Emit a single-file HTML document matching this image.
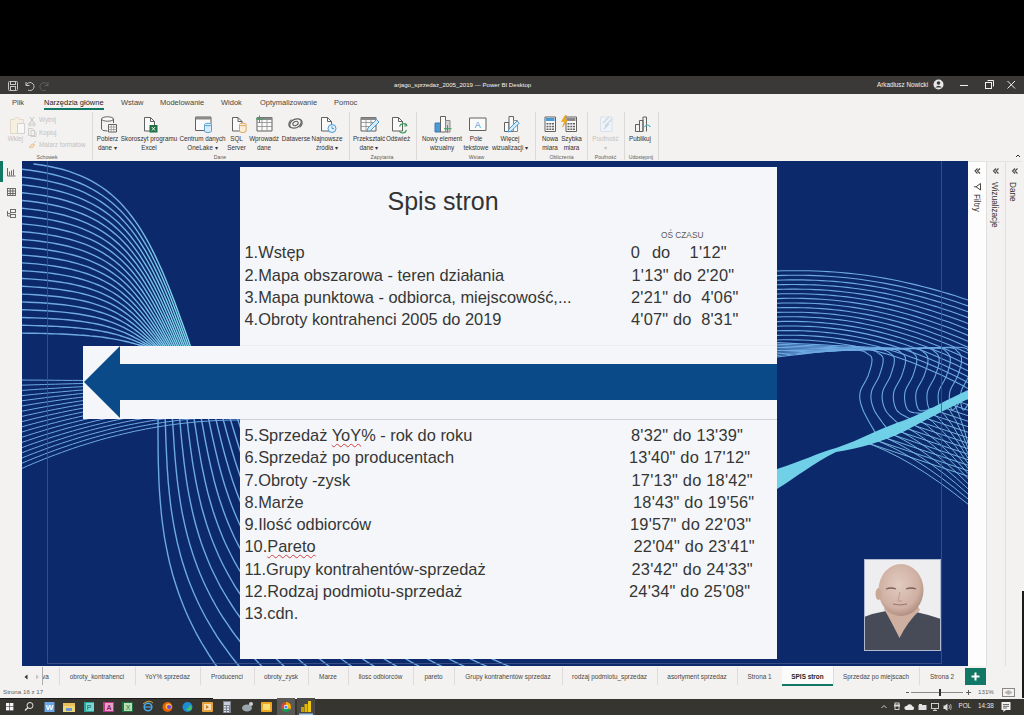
<!DOCTYPE html>
<html><head><meta charset="utf-8">
<style>
*{margin:0;padding:0;box-sizing:border-box}
html,body{width:1024px;height:715px;overflow:hidden;background:#000;font-family:"Liberation Sans",sans-serif}
.a{position:absolute}
.t{position:absolute;white-space:nowrap;line-height:1}
#titlebar{left:0;top:76px;width:1024px;height:18px;background:#3a3938}
#ribbon{left:0;top:94px;width:1024px;height:67px;background:#f3f2f1}
#leftnav{left:0;top:161px;width:22px;height:505px;background:#f3f2f1}
#canvas{left:22px;top:161px;width:946px;height:505px;background:#0c296b;overflow:hidden}
#filtry{left:968px;top:161px;width:18px;height:505px;background:#fdfdfd}
#wiz{left:986px;top:161px;width:19px;height:505px;background:#f3f2f1;border-left:1px solid #e1dfdd}
#dane{left:1005px;top:161px;width:17px;height:505px;background:#f3f2f1;border-left:1px solid #e1dfdd}
#rstrip{left:1022px;top:93px;width:2px;height:605px;background:#f3f2f1}
#tabs{left:0;top:666px;width:1024px;height:20px;background:#f3f2f1}
#status{left:0;top:686px;width:1024px;height:13px;background:#f3f2f1}
#taskbar{left:0;top:698.5px;width:1024px;height:16.5px;background:#363530}
.panel{position:absolute;background:#f4f6f9}
.li{position:absolute;font-size:16.4px;color:#363636;white-space:pre;line-height:1}
.tm{letter-spacing:0.2px}
.sp{text-decoration:underline wavy #d04040;text-decoration-thickness:1px;text-underline-offset:2px}

.rt{top:99px;font-size:7.5px;color:#484644}
.sep{top:112px;width:1px;height:48px;background:#dcdad8}
.lb{position:absolute;width:90px;margin-left:-45px;text-align:center;font-size:6.3px;line-height:9px;top:133.5px;color:#323130;white-space:nowrap}
.dis{color:#c3c1bf}
.sm{font-size:6.3px}
.gl{position:absolute;width:60px;margin-left:-30px;text-align:center;font-size:5.2px;top:154.5px;color:#605e5c;white-space:nowrap;line-height:1}
.tb{position:absolute;top:673.8px;text-align:center;font-size:6.4px;color:#484644;white-space:nowrap;line-height:1}
.vt{position:absolute;font-size:7.3px;color:#323130;white-space:nowrap;line-height:1;writing-mode:vertical-rl}
</style></head><body>
<div id="titlebar" class="a"></div>
<div id="ribbon" class="a"></div>
<div id="leftnav" class="a"></div>
<div id="canvas" class="a">
</div>
<!--WAVES-->
<svg class="a" style="left:22px;top:161px" width="946" height="505" viewBox="22 161 946 505">
<defs><linearGradient id="ga" gradientUnits="userSpaceOnUse" x1="120" y1="0" x2="185" y2="0"><stop offset="0" stop-color="#6eaae2"/><stop offset="1" stop-color="#80d8ec"/></linearGradient><linearGradient id="gb" gradientUnits="userSpaceOnUse" x1="120" y1="0" x2="240" y2="0"><stop offset="0" stop-color="#6eaae2"/><stop offset="1" stop-color="#86d2ee"/></linearGradient></defs>
<g fill="none" stroke-width="1.4" stroke-linecap="round">
<path d="M34.0,164.0 L41.4,165.0 L48.6,166.3 L55.4,167.7 L62.0,169.3 L68.4,171.2 L74.4,173.3 L80.3,175.6 L85.9,178.1 L91.3,180.8 L96.4,183.8 L101.4,187.0 L106.2,190.4 L110.8,194.1 L115.2,198.0 L119.5,202.1 L123.6,206.5 L127.6,211.1 L131.4,216.0 L135.2,221.1 L138.8,226.4 L142.4,232.1 L145.8,237.9 L149.2,244.0 L152.5,250.4 L155.8,257.1 L159.0,264.0 L162.2,271.1 L165.3,278.6 L168.5,286.3 L171.6,294.2 L174.8,302.5 L177.9,311.0 L181.1,319.9 L184.4,328.9 L187.7,338.3 L191.0,348.0" stroke="url(#ga)" stroke-width="1.4"/>
<path d="M22.0,169.3 L30.3,170.3 L38.3,171.5 L45.9,172.9 L53.3,174.5 L60.3,176.3 L67.0,178.3 L73.4,180.6 L79.6,183.0 L85.5,185.7 L91.1,188.5 L96.5,191.7 L101.7,195.0 L106.7,198.5 L111.4,202.3 L116.0,206.3 L120.4,210.6 L124.7,215.1 L128.7,219.8 L132.7,224.7 L136.5,229.9 L140.1,235.4 L143.7,241.1 L147.2,247.0 L150.6,253.2 L153.9,259.7 L157.2,266.4 L160.4,273.3 L163.6,280.6 L166.7,288.0 L169.9,295.8 L173.0,303.8 L176.2,312.1 L179.3,320.7 L182.5,329.5 L185.8,338.6 L189.1,348.0" stroke="url(#ga)" stroke-width="1.4"/>
<path d="M22.0,177.1 L30.2,178.0 L38.1,179.2 L45.7,180.5 L52.9,182.1 L59.8,183.8 L66.5,185.7 L72.8,187.9 L78.9,190.2 L84.7,192.7 L90.3,195.5 L95.7,198.5 L100.8,201.7 L105.7,205.1 L110.4,208.7 L114.9,212.5 L119.3,216.6 L123.5,220.9 L127.5,225.4 L131.4,230.1 L135.2,235.1 L138.8,240.3 L142.3,245.8 L145.8,251.4 L149.1,257.4 L152.4,263.5 L155.6,269.9 L158.8,276.6 L162.0,283.5 L165.1,290.7 L168.2,298.1 L171.3,305.7 L174.4,313.7 L177.5,321.9 L180.7,330.3 L183.9,339.0 L187.2,348.0" stroke="url(#ga)" stroke-width="1.4"/>
<path d="M22.0,184.9 L30.1,185.8 L37.9,186.9 L45.4,188.2 L52.5,189.6 L59.4,191.3 L66.0,193.1 L72.2,195.2 L78.3,197.4 L84.0,199.8 L89.5,202.5 L94.8,205.3 L99.9,208.3 L104.7,211.6 L109.4,215.0 L113.9,218.7 L118.2,222.6 L122.3,226.7 L126.3,231.0 L130.1,235.5 L133.8,240.3 L137.4,245.2 L140.9,250.4 L144.3,255.8 L147.7,261.5 L150.9,267.4 L154.1,273.5 L157.2,279.9 L160.3,286.4 L163.4,293.3 L166.5,300.4 L169.6,307.7 L172.6,315.2 L175.7,323.0 L178.9,331.1 L182.0,339.4 L185.3,348.0" stroke="url(#ga)" stroke-width="1.4"/>
<path d="M22.0,192.7 L30.0,193.6 L37.7,194.6 L45.1,195.8 L52.2,197.2 L59.0,198.8 L65.4,200.5 L71.7,202.5 L77.6,204.6 L83.3,206.9 L88.7,209.4 L94.0,212.1 L99.0,215.0 L103.8,218.1 L108.4,221.4 L112.8,224.9 L117.0,228.6 L121.1,232.5 L125.1,236.6 L128.9,240.9 L132.5,245.4 L136.1,250.1 L139.6,255.1 L142.9,260.3 L146.2,265.6 L149.4,271.2 L152.6,277.1 L155.7,283.1 L158.7,289.4 L161.8,295.9 L164.8,302.6 L167.8,309.6 L170.9,316.8 L173.9,324.2 L177.0,331.9 L180.2,339.8 L183.4,348.0" stroke="url(#ga)" stroke-width="1.4"/>
<path d="M22.0,200.5 L29.9,201.3 L37.5,202.3 L44.8,203.5 L51.8,204.8 L58.5,206.3 L64.9,207.9 L71.1,209.8 L76.9,211.8 L82.6,214.0 L88.0,216.4 L93.1,218.9 L98.1,221.7 L102.8,224.6 L107.4,227.8 L111.7,231.1 L115.9,234.6 L120.0,238.3 L123.9,242.2 L127.6,246.3 L131.2,250.6 L134.7,255.1 L138.2,259.8 L141.5,264.7 L144.7,269.8 L147.9,275.1 L151.0,280.6 L154.1,286.4 L157.1,292.3 L160.1,298.5 L163.1,304.9 L166.1,311.5 L169.1,318.4 L172.1,325.4 L175.2,332.7 L178.3,340.2 L181.5,348.0" stroke="url(#ga)" stroke-width="1.4"/>
<path d="M22.0,208.3 L29.8,209.1 L37.4,210.0 L44.6,211.1 L51.5,212.4 L58.1,213.8 L64.4,215.3 L70.5,217.1 L76.3,219.0 L81.8,221.1 L87.2,223.3 L92.3,225.8 L97.2,228.4 L101.8,231.2 L106.3,234.1 L110.7,237.3 L114.8,240.6 L118.8,244.1 L122.6,247.8 L126.3,251.6 L129.9,255.7 L133.4,260.0 L136.8,264.4 L140.1,269.1 L143.3,273.9 L146.4,278.9 L149.5,284.2 L152.5,289.6 L155.5,295.3 L158.5,301.1 L161.4,307.2 L164.4,313.5 L167.3,319.9 L170.3,326.6 L173.4,333.5 L176.4,340.7 L179.5,348.0" stroke="url(#ga)" stroke-width="1.4"/>
<path d="M22.0,216.1 L29.7,216.8 L37.2,217.7 L44.3,218.7 L51.1,219.9 L57.6,221.3 L63.9,222.8 L69.9,224.4 L75.6,226.2 L81.1,228.2 L86.4,230.3 L91.4,232.6 L96.2,235.1 L100.9,237.7 L105.3,240.5 L109.6,243.4 L113.7,246.6 L117.6,249.9 L121.4,253.4 L125.1,257.0 L128.6,260.9 L132.0,264.9 L135.4,269.1 L138.6,273.5 L141.8,278.0 L144.9,282.8 L147.9,287.8 L150.9,292.9 L153.9,298.2 L156.8,303.7 L159.7,309.5 L162.7,315.4 L165.6,321.5 L168.5,327.8 L171.5,334.3 L174.6,341.1 L177.6,348.0" stroke="url(#ga)" stroke-width="1.4"/>
<path d="M22.0,223.9 L29.7,224.6 L37.0,225.4 L44.0,226.4 L50.8,227.5 L57.2,228.8 L63.4,230.2 L69.3,231.7 L75.0,233.4 L80.4,235.3 L85.6,237.3 L90.6,239.4 L95.3,241.7 L99.9,244.2 L104.3,246.8 L108.5,249.6 L112.5,252.6 L116.4,255.7 L120.2,259.0 L123.8,262.4 L127.3,266.0 L130.7,269.8 L134.0,273.8 L137.2,277.9 L140.3,282.2 L143.4,286.7 L146.4,291.3 L149.3,296.1 L152.3,301.2 L155.2,306.4 L158.0,311.7 L160.9,317.3 L163.8,323.1 L166.7,329.0 L169.7,335.2 L172.7,341.5 L175.7,348.0" stroke="url(#ga)" stroke-width="1.4"/>
<path d="M22.0,231.7 L29.6,232.3 L36.8,233.1 L43.7,234.0 L50.4,235.1 L56.8,236.3 L62.9,237.6 L68.7,239.0 L74.3,240.6 L79.7,242.3 L84.8,244.2 L89.7,246.2 L94.4,248.4 L98.9,250.7 L103.3,253.2 L107.4,255.8 L111.4,258.6 L115.3,261.5 L119.0,264.6 L122.5,267.8 L126.0,271.2 L129.3,274.7 L132.6,278.4 L135.8,282.3 L138.8,286.3 L141.9,290.5 L144.8,294.9 L147.7,299.4 L150.6,304.1 L153.5,309.0 L156.4,314.0 L159.2,319.2 L162.1,324.6 L164.9,330.2 L167.9,336.0 L170.8,341.9 L173.8,348.0" stroke="url(#ga)" stroke-width="1.4"/>
<path d="M22.0,239.5 L29.5,240.1 L36.6,240.8 L43.5,241.7 L50.0,242.6 L56.3,243.7 L62.4,245.0 L68.1,246.3 L73.7,247.8 L78.9,249.4 L84.0,251.2 L88.9,253.1 L93.5,255.1 L98.0,257.3 L102.2,259.5 L106.4,262.0 L110.3,264.6 L114.1,267.3 L117.8,270.2 L121.3,273.2 L124.7,276.3 L128.0,279.6 L131.2,283.1 L134.3,286.7 L137.4,290.5 L140.4,294.4 L143.3,298.4 L146.2,302.7 L149.0,307.1 L151.8,311.6 L154.7,316.3 L157.5,321.2 L160.3,326.2 L163.1,331.4 L166.0,336.8 L168.9,342.3 L171.9,348.0" stroke="url(#ga)" stroke-width="1.4"/>
<path d="M22.0,247.3 L29.4,247.9 L36.4,248.5 L43.2,249.3 L49.7,250.2 L55.9,251.2 L61.8,252.4 L67.5,253.6 L73.0,255.0 L78.2,256.5 L83.2,258.1 L88.0,259.9 L92.6,261.8 L97.0,263.8 L101.2,265.9 L105.3,268.2 L109.2,270.6 L112.9,273.1 L116.5,275.7 L120.0,278.5 L123.4,281.5 L126.6,284.5 L129.8,287.8 L132.9,291.1 L135.9,294.6 L138.8,298.2 L141.7,302.0 L144.6,305.9 L147.4,310.0 L150.2,314.2 L153.0,318.6 L155.8,323.1 L158.5,327.8 L161.4,332.6 L164.2,337.6 L167.1,342.7 L170.0,348.0" stroke="url(#ga)" stroke-width="1.4"/>
<path d="M22.0,255.1 L29.3,255.6 L36.2,256.2 L42.9,257.0 L49.3,257.8 L55.5,258.7 L61.3,259.8 L67.0,260.9 L72.3,262.2 L77.5,263.6 L82.4,265.1 L87.2,266.7 L91.7,268.5 L96.0,270.3 L100.2,272.3 L104.2,274.4 L108.1,276.6 L111.8,278.9 L115.3,281.3 L118.8,283.9 L122.1,286.6 L125.3,289.5 L128.4,292.4 L131.5,295.5 L134.4,298.7 L137.3,302.1 L140.2,305.6 L143.0,309.2 L145.8,312.9 L148.5,316.8 L151.3,320.9 L154.0,325.0 L156.8,329.3 L159.6,333.8 L162.4,338.4 L165.2,343.1 L168.1,348.0" stroke="url(#ga)" stroke-width="1.4"/>
<path d="M22.0,262.9 L29.2,263.4 L36.1,263.9 L42.7,264.6 L49.0,265.4 L55.0,266.2 L60.8,267.2 L66.4,268.3 L71.7,269.4 L76.8,270.7 L81.6,272.1 L86.3,273.5 L90.8,275.1 L95.1,276.8 L99.2,278.6 L103.1,280.5 L106.9,282.6 L110.6,284.7 L114.1,286.9 L117.5,289.3 L120.8,291.8 L123.9,294.4 L127.0,297.1 L130.0,299.9 L133.0,302.9 L135.8,305.9 L138.6,309.1 L141.4,312.4 L144.2,315.9 L146.9,319.4 L149.6,323.1 L152.3,327.0 L155.0,330.9 L157.8,335.0 L160.5,339.2 L163.3,343.5 L166.2,348.0" stroke="url(#ga)" stroke-width="1.4"/>
<path d="M22.0,270.7 L29.1,271.1 L35.9,271.6 L42.4,272.3 L48.6,272.9 L54.6,273.7 L60.3,274.6 L65.8,275.6 L71.0,276.6 L76.0,277.8 L80.8,279.0 L85.5,280.4 L89.9,281.8 L94.1,283.3 L98.2,285.0 L102.1,286.7 L105.8,288.6 L109.4,290.5 L112.9,292.5 L116.2,294.7 L119.5,296.9 L122.6,299.3 L125.6,301.8 L128.6,304.3 L131.5,307.0 L134.3,309.8 L137.1,312.7 L139.8,315.7 L142.5,318.8 L145.2,322.1 L147.9,325.4 L150.6,328.9 L153.3,332.5 L156.0,336.2 L158.7,340.0 L161.5,343.9 L164.3,348.0" stroke="url(#ga)" stroke-width="1.4"/>
<path d="M22.0,278.5 L29.0,278.9 L35.7,279.4 L42.1,279.9 L48.3,280.5 L54.1,281.2 L59.8,282.0 L65.2,282.9 L70.4,283.8 L75.3,284.9 L80.1,286.0 L84.6,287.2 L89.0,288.5 L93.1,289.9 L97.1,291.3 L101.0,292.9 L104.7,294.6 L108.2,296.3 L111.7,298.1 L115.0,300.1 L118.2,302.1 L121.2,304.2 L124.3,306.4 L127.2,308.7 L130.0,311.1 L132.8,313.6 L135.6,316.3 L138.3,319.0 L140.9,321.8 L143.6,324.7 L146.2,327.7 L148.9,330.8 L151.5,334.0 L154.2,337.4 L156.9,340.8 L159.6,344.3 L162.4,348.0" stroke="url(#ga)" stroke-width="1.4"/>
<path d="M22.0,286.3 L28.9,286.6 L35.5,287.1 L41.8,287.5 L47.9,288.1 L53.7,288.7 L59.3,289.4 L64.6,290.2 L69.7,291.0 L74.6,291.9 L79.3,292.9 L83.8,294.0 L88.0,295.2 L92.2,296.4 L96.1,297.7 L99.9,299.1 L103.6,300.6 L107.1,302.1 L110.4,303.7 L113.7,305.4 L116.8,307.2 L119.9,309.1 L122.9,311.1 L125.7,313.1 L128.6,315.3 L131.3,317.5 L134.0,319.8 L136.7,322.2 L139.3,324.7 L141.9,327.3 L144.5,330.0 L147.1,332.7 L149.7,335.6 L152.4,338.6 L155.0,341.6 L157.7,344.8 L160.5,348.0" stroke="url(#ga)" stroke-width="1.4"/>
<path d="M22.0,294.1 L28.8,294.4 L35.3,294.8 L41.6,295.2 L47.5,295.7 L53.3,296.2 L58.8,296.8 L64.0,297.5 L69.0,298.2 L73.9,299.0 L78.5,299.9 L82.9,300.8 L87.1,301.8 L91.2,302.9 L95.1,304.1 L98.8,305.3 L102.4,306.6 L105.9,307.9 L109.2,309.3 L112.4,310.8 L115.5,312.4 L118.5,314.0 L121.5,315.8 L124.3,317.5 L127.1,319.4 L129.8,321.4 L132.5,323.4 L135.1,325.5 L137.7,327.7 L140.3,329.9 L142.8,332.3 L145.4,334.7 L148.0,337.2 L150.6,339.8 L153.2,342.4 L155.8,345.2 L158.5,348.0" stroke="url(#ga)" stroke-width="1.4"/>
<path d="M22.0,301.9 L28.7,302.2 L35.1,302.5 L41.3,302.8 L47.2,303.2 L52.8,303.7 L58.2,304.2 L63.4,304.8 L68.4,305.4 L73.1,306.1 L77.7,306.9 L82.0,307.7 L86.2,308.5 L90.2,309.4 L94.1,310.4 L97.8,311.5 L101.3,312.5 L104.7,313.7 L108.0,314.9 L111.2,316.2 L114.2,317.5 L117.2,319.0 L120.1,320.4 L122.9,322.0 L125.6,323.5 L128.3,325.2 L130.9,326.9 L133.5,328.7 L136.1,330.6 L138.6,332.5 L141.1,334.5 L143.7,336.6 L146.2,338.7 L148.8,340.9 L151.4,343.2 L154.0,345.6 L156.6,348.0" stroke="url(#ga)" stroke-width="1.4"/>
<path d="M22.0,309.7 L28.6,309.9 L34.9,310.2 L41.0,310.5 L46.8,310.8 L52.4,311.2 L57.7,311.6 L62.8,312.1 L67.7,312.6 L72.4,313.2 L76.9,313.8 L81.2,314.5 L85.3,315.2 L89.3,316.0 L93.1,316.8 L96.7,317.6 L100.2,318.5 L103.5,319.5 L106.8,320.5 L109.9,321.6 L112.9,322.7 L115.9,323.9 L118.7,325.1 L121.5,326.4 L124.2,327.7 L126.8,329.1 L129.4,330.5 L131.9,332.0 L134.5,333.5 L137.0,335.2 L139.5,336.8 L142.0,338.5 L144.5,340.3 L147.0,342.1 L149.5,344.0 L152.1,346.0 L154.7,348.0" stroke="url(#ga)" stroke-width="1.4"/>
<path d="M22.0,317.5 L28.5,317.7 L34.8,317.9 L40.7,318.1 L46.5,318.4 L52.0,318.7 L57.2,319.0 L62.3,319.4 L67.1,319.8 L71.7,320.3 L76.1,320.8 L80.3,321.3 L84.4,321.9 L88.3,322.5 L92.0,323.1 L95.6,323.8 L99.1,324.5 L102.4,325.3 L105.6,326.1 L108.6,327.0 L111.6,327.9 L114.5,328.8 L117.3,329.8 L120.0,330.8 L122.7,331.8 L125.3,332.9 L127.8,334.1 L130.4,335.3 L132.8,336.5 L135.3,337.8 L137.8,339.1 L140.2,340.5 L142.7,341.9 L145.2,343.3 L147.7,344.8 L150.2,346.4 L152.8,348.0" stroke="url(#ga)" stroke-width="1.4"/>
<path d="M22.0,325.3 L28.4,325.4 L34.6,325.6 L40.5,325.8 L46.1,326.0 L51.5,326.2 L56.7,326.4 L61.7,326.7 L66.4,327.0 L71.0,327.4 L75.3,327.7 L79.5,328.1 L83.5,328.6 L87.3,329.0 L91.0,329.5 L94.5,330.0 L97.9,330.5 L101.2,331.1 L104.3,331.7 L107.4,332.3 L110.3,333.0 L113.2,333.7 L115.9,334.4 L118.6,335.2 L121.2,336.0 L123.8,336.8 L126.3,337.6 L128.8,338.5 L131.2,339.4 L133.7,340.4 L136.1,341.4 L138.5,342.4 L140.9,343.4 L143.4,344.5 L145.8,345.6 L148.4,346.8 L150.9,348.0" stroke="url(#ga)" stroke-width="1.4"/>
<path d="M22.0,333.1 L28.3,333.2 L34.4,333.3 L40.2,333.4 L45.8,333.5 L51.1,333.7 L56.2,333.9 L61.1,334.0 L65.8,334.2 L70.2,334.5 L74.5,334.7 L78.6,335.0 L82.6,335.2 L86.4,335.5 L90.0,335.9 L93.5,336.2 L96.8,336.5 L100.0,336.9 L103.1,337.3 L106.1,337.7 L109.0,338.2 L111.8,338.6 L114.5,339.1 L117.2,339.6 L119.7,340.1 L122.3,340.6 L124.7,341.2 L127.2,341.8 L129.6,342.4 L132.0,343.0 L134.4,343.6 L136.8,344.3 L139.2,345.0 L141.6,345.7 L144.0,346.5 L146.5,347.2 L149.0,348.0" stroke="url(#ga)" stroke-width="1.4"/>
<path d="M22.0,380.0 L27.6,380.1 L33.2,380.1 L38.9,380.1 L44.5,380.2 L50.1,380.2 L55.8,380.3 L61.4,380.3 L67.0,380.4 L72.6,380.4 L78.2,380.4 L83.9,380.5 L89.5,380.5 L95.1,380.6 L100.8,380.6 L106.4,380.6 L112.0,380.7 L117.6,380.7 L123.2,380.7 L128.9,380.7 L134.5,380.8 L140.1,380.8 L145.8,380.8 L151.4,380.8 L157.0,380.9 L162.6,380.9 L168.2,380.9 L173.9,380.9 L179.5,380.9 L185.1,380.9 L190.8,380.9 L196.4,381.0 L202.0,381.0 L207.6,381.0 L213.2,381.0 L218.9,381.0 L224.5,381.0 L230.1,381.0 L235.8,381.0 L241.4,381.0 L247.0,381.0" stroke="#6eaae2" stroke-width="1.0"/>
<path d="M22.0,385.2 L27.6,385.0 L33.2,384.8 L38.9,384.7 L44.5,384.5 L50.1,384.3 L55.8,384.2 L61.4,384.0 L67.0,383.9 L72.6,383.7 L78.2,383.6 L83.9,383.4 L89.5,383.3 L95.1,383.2 L100.8,383.0 L106.4,382.9 L112.0,382.8 L117.6,382.7 L123.2,382.6 L128.9,382.5 L134.5,382.4 L140.1,382.3 L145.8,382.2 L151.4,382.2 L157.0,382.1 L162.6,382.0 L168.2,382.0 L173.9,381.9 L179.5,381.8 L185.1,381.8 L190.8,381.7 L196.4,381.7 L202.0,381.7 L207.6,381.6 L213.2,381.6 L218.9,381.6 L224.5,381.6 L230.1,381.6 L235.8,381.6 L241.4,381.6 L247.0,381.6" stroke="#6eaae2" stroke-width="1.0"/>
<path d="M22.0,390.4 L27.6,390.0 L33.2,389.6 L38.9,389.2 L44.5,388.9 L50.1,388.5 L55.8,388.2 L61.4,387.8 L67.0,387.5 L72.6,387.2 L78.2,386.9 L83.9,386.6 L89.5,386.3 L95.1,386.0 L100.8,385.8 L106.4,385.5 L112.0,385.3 L117.6,385.0 L123.2,384.8 L128.9,384.6 L134.5,384.4 L140.1,384.2 L145.8,384.0 L151.4,383.9 L157.0,383.7 L162.6,383.6 L168.2,383.4 L173.9,383.3 L179.5,383.2 L185.1,383.1 L190.8,383.0 L196.4,382.9 L202.0,382.8 L207.6,382.7 L213.2,382.7 L218.9,382.6 L224.5,382.6 L230.1,382.6 L235.8,382.6 L241.4,382.6 L247.0,382.6" stroke="#6eaae2" stroke-width="1.0"/>
<path d="M22.0,395.6 L27.6,395.0 L33.2,394.4 L38.9,393.9 L44.5,393.3 L50.1,392.8 L55.8,392.3 L61.4,391.8 L67.0,391.3 L72.6,390.8 L78.2,390.3 L83.9,389.9 L89.5,389.5 L95.1,389.1 L100.8,388.7 L106.4,388.3 L112.0,387.9 L117.6,387.6 L123.2,387.2 L128.9,386.9 L134.5,386.6 L140.1,386.3 L145.8,386.1 L151.4,385.8 L157.0,385.6 L162.6,385.4 L168.2,385.2 L173.9,385.0 L179.5,384.8 L185.1,384.6 L190.8,384.5 L196.4,384.4 L202.0,384.2 L207.6,384.1 L213.2,384.1 L218.9,384.0 L224.5,384.0 L230.1,383.9 L235.8,383.9 L241.4,383.9 L247.0,383.9" stroke="#6eaae2" stroke-width="1.0"/>
<path d="M22.0,400.8 L27.6,400.0 L33.2,399.3 L38.9,398.5 L44.5,397.8 L50.1,397.1 L55.8,396.4 L61.4,395.8 L67.0,395.1 L72.6,394.5 L78.2,393.9 L83.9,393.3 L89.5,392.8 L95.1,392.2 L100.8,391.7 L106.4,391.2 L112.0,390.7 L117.6,390.3 L123.2,389.9 L128.9,389.4 L134.5,389.0 L140.1,388.7 L145.8,388.3 L151.4,388.0 L157.0,387.7 L162.6,387.4 L168.2,387.1 L173.9,386.9 L179.5,386.6 L185.1,386.4 L190.8,386.2 L196.4,386.1 L202.0,385.9 L207.6,385.8 L213.2,385.7 L218.9,385.6 L224.5,385.5 L230.1,385.5 L235.8,385.5 L241.4,385.5 L247.0,385.5" stroke="#6eaae2" stroke-width="1.0"/>
<path d="M22.0,406.0 L27.6,405.0 L33.2,404.1 L38.9,403.2 L44.5,402.3 L50.1,401.5 L55.8,400.6 L61.4,399.8 L67.0,399.0 L72.6,398.3 L78.2,397.6 L83.9,396.9 L89.5,396.2 L95.1,395.5 L100.8,394.9 L106.4,394.3 L112.0,393.7 L117.6,393.1 L123.2,392.6 L128.9,392.1 L134.5,391.6 L140.1,391.2 L145.8,390.7 L151.4,390.3 L157.0,389.9 L162.6,389.6 L168.2,389.3 L173.9,388.9 L179.5,388.7 L185.1,388.4 L190.8,388.2 L196.4,388.0 L202.0,387.8 L207.6,387.6 L213.2,387.5 L218.9,387.4 L224.5,387.3 L230.1,387.3 L235.8,387.2 L241.4,387.2 L247.0,387.2" stroke="#6eaae2" stroke-width="1.0"/>
<path d="M22.0,411.2 L27.6,410.1 L33.2,409.0 L38.9,407.9 L44.5,406.9 L50.1,405.9 L55.8,404.9 L61.4,404.0 L67.0,403.0 L72.6,402.2 L78.2,401.3 L83.9,400.5 L89.5,399.7 L95.1,398.9 L100.8,398.2 L106.4,397.5 L112.0,396.8 L117.6,396.1 L123.2,395.5 L128.9,394.9 L134.5,394.3 L140.1,393.8 L145.8,393.3 L151.4,392.8 L157.0,392.4 L162.6,392.0 L168.2,391.6 L173.9,391.2 L179.5,390.9 L185.1,390.6 L190.8,390.3 L196.4,390.1 L202.0,389.8 L207.6,389.7 L213.2,389.5 L218.9,389.4 L224.5,389.3 L230.1,389.2 L235.8,389.2 L241.4,389.2 L247.0,389.2" stroke="#6eaae2" stroke-width="1.0"/>
<path d="M22.0,416.4 L27.6,415.1 L33.2,413.9 L38.9,412.7 L44.5,411.5 L50.1,410.3 L55.8,409.2 L61.4,408.2 L67.0,407.1 L72.6,406.1 L78.2,405.1 L83.9,404.2 L89.5,403.3 L95.1,402.4 L100.8,401.5 L106.4,400.7 L112.0,400.0 L117.6,399.2 L123.2,398.5 L128.9,397.8 L134.5,397.2 L140.1,396.6 L145.8,396.0 L151.4,395.5 L157.0,394.9 L162.6,394.5 L168.2,394.0 L173.9,393.6 L179.5,393.2 L185.1,392.9 L190.8,392.6 L196.4,392.3 L202.0,392.1 L207.6,391.9 L213.2,391.7 L218.9,391.5 L224.5,391.4 L230.1,391.4 L235.8,391.3 L241.4,391.3 L247.0,391.3" stroke="#6eaae2" stroke-width="1.0"/>
<path d="M22.0,421.6 L27.6,420.2 L33.2,418.8 L38.9,417.4 L44.5,416.1 L50.1,414.8 L55.8,413.6 L61.4,412.4 L67.0,411.2 L72.6,410.1 L78.2,409.0 L83.9,408.0 L89.5,406.9 L95.1,406.0 L100.8,405.0 L106.4,404.1 L112.0,403.2 L117.6,402.4 L123.2,401.6 L128.9,400.9 L134.5,400.2 L140.1,399.5 L145.8,398.8 L151.4,398.2 L157.0,397.7 L162.6,397.1 L168.2,396.6 L173.9,396.2 L179.5,395.7 L185.1,395.4 L190.8,395.0 L196.4,394.7 L202.0,394.4 L207.6,394.2 L213.2,394.0 L218.9,393.9 L224.5,393.7 L230.1,393.6 L235.8,393.6 L241.4,393.6 L247.0,393.6" stroke="#6eaae2" stroke-width="1.0"/>
<path d="M22.0,426.8 L27.6,425.2 L33.2,423.7 L38.9,422.2 L44.5,420.8 L50.1,419.4 L55.8,418.0 L61.4,416.7 L67.0,415.4 L72.6,414.2 L78.2,413.0 L83.9,411.8 L89.5,410.7 L95.1,409.6 L100.8,408.6 L106.4,407.6 L112.0,406.6 L117.6,405.7 L123.2,404.9 L128.9,404.0 L134.5,403.2 L140.1,402.5 L145.8,401.8 L151.4,401.1 L157.0,400.5 L162.6,399.9 L168.2,399.4 L173.9,398.9 L179.5,398.4 L185.1,398.0 L190.8,397.6 L196.4,397.3 L202.0,397.0 L207.6,396.7 L213.2,396.5 L218.9,396.3 L224.5,396.2 L230.1,396.1 L235.8,396.0 L241.4,396.0 L247.0,396.0" stroke="#6eaae2" stroke-width="1.0"/>
<path d="M22.0,432.0 L27.6,430.3 L33.2,428.6 L38.9,427.0 L44.5,425.5 L50.1,423.9 L55.8,422.5 L61.4,421.0 L67.0,419.6 L72.6,418.3 L78.2,417.0 L83.9,415.7 L89.5,414.5 L95.1,413.3 L100.8,412.2 L106.4,411.1 L112.0,410.1 L117.6,409.1 L123.2,408.2 L128.9,407.3 L134.5,406.4 L140.1,405.6 L145.8,404.8 L151.4,404.1 L157.0,403.4 L162.6,402.8 L168.2,402.2 L173.9,401.7 L179.5,401.2 L185.1,400.7 L190.8,400.3 L196.4,399.9 L202.0,399.6 L207.6,399.3 L213.2,399.1 L218.9,398.9 L224.5,398.8 L230.1,398.7 L235.8,398.6 L241.4,398.6 L247.0,398.6" stroke="#6eaae2" stroke-width="1.0"/>
<path d="M22.0,437.2 L27.6,435.4 L33.2,433.6 L38.9,431.9 L44.5,430.2 L50.1,428.5 L55.8,426.9 L61.4,425.4 L67.0,423.9 L72.6,422.5 L78.2,421.1 L83.9,419.7 L89.5,418.4 L95.1,417.2 L100.8,415.9 L106.4,414.8 L112.0,413.7 L117.6,412.6 L123.2,411.6 L128.9,410.6 L134.5,409.7 L140.1,408.8 L145.8,408.0 L151.4,407.2 L157.0,406.5 L162.6,405.8 L168.2,405.2 L173.9,404.6 L179.5,404.1 L185.1,403.6 L190.8,403.1 L196.4,402.7 L202.0,402.4 L207.6,402.1 L213.2,401.8 L218.9,401.6 L224.5,401.5 L230.1,401.4 L235.8,401.3 L241.4,401.3 L247.0,401.3" stroke="#6eaae2" stroke-width="1.0"/>
<path d="M22.0,442.4 L27.6,440.5 L33.2,438.6 L38.9,436.7 L44.5,434.9 L50.1,433.2 L55.8,431.5 L61.4,429.8 L67.0,428.2 L72.6,426.7 L78.2,425.2 L83.9,423.8 L89.5,422.4 L95.1,421.0 L100.8,419.7 L106.4,418.5 L112.0,417.3 L117.6,416.2 L123.2,415.1 L128.9,414.1 L134.5,413.1 L140.1,412.2 L145.8,411.3 L151.4,410.5 L157.0,409.7 L162.6,409.0 L168.2,408.3 L173.9,407.7 L179.5,407.1 L185.1,406.6 L190.8,406.1 L196.4,405.7 L202.0,405.3 L207.6,405.0 L213.2,404.7 L218.9,404.5 L224.5,404.3 L230.1,404.2 L235.8,404.1 L241.4,404.1 L247.0,404.1" stroke="#6eaae2" stroke-width="1.0"/>
<path d="M22.0,447.6 L27.6,445.5 L33.2,443.5 L38.9,441.6 L44.5,439.7 L50.1,437.8 L55.8,436.0 L61.4,434.3 L67.0,432.6 L72.6,431.0 L78.2,429.4 L83.9,427.9 L89.5,426.4 L95.1,425.0 L100.8,423.6 L106.4,422.3 L112.0,421.0 L117.6,419.8 L123.2,418.7 L128.9,417.6 L134.5,416.6 L140.1,415.6 L145.8,414.7 L151.4,413.8 L157.0,413.0 L162.6,412.2 L168.2,411.5 L173.9,410.8 L179.5,410.2 L185.1,409.6 L190.8,409.1 L196.4,408.7 L202.0,408.3 L207.6,408.0 L213.2,407.7 L218.9,407.5 L224.5,407.3 L230.1,407.2 L235.8,407.1 L241.4,407.1 L247.0,407.1" stroke="#6eaae2" stroke-width="1.0"/>
<path d="M22.0,452.8 L27.6,450.6 L33.2,448.5 L38.9,446.5 L44.5,444.4 L50.1,442.5 L55.8,440.6 L61.4,438.8 L67.0,437.0 L72.6,435.3 L78.2,433.6 L83.9,432.0 L89.5,430.5 L95.1,429.0 L100.8,427.5 L106.4,426.2 L112.0,424.9 L117.6,423.6 L123.2,422.4 L128.9,421.2 L134.5,420.1 L140.1,419.1 L145.8,418.1 L151.4,417.2 L157.0,416.3 L162.6,415.5 L168.2,414.8 L173.9,414.1 L179.5,413.4 L185.1,412.8 L190.8,412.3 L196.4,411.9 L202.0,411.4 L207.6,411.1 L213.2,410.8 L218.9,410.5 L224.5,410.4 L230.1,410.2 L235.8,410.2 L241.4,410.1 L247.0,410.1" stroke="#6eaae2" stroke-width="1.0"/>
<path d="M22.0,458.0 L27.6,455.7 L33.2,453.5 L38.9,451.4 L44.5,449.3 L50.1,447.2 L55.8,445.2 L61.4,443.3 L67.0,441.5 L72.6,439.7 L78.2,437.9 L83.9,436.2 L89.5,434.6 L95.1,433.1 L100.8,431.6 L106.4,430.1 L112.0,428.7 L117.6,427.4 L123.2,426.1 L128.9,424.9 L134.5,423.8 L140.1,422.7 L145.8,421.7 L151.4,420.7 L157.0,419.8 L162.6,419.0 L168.2,418.2 L173.9,417.4 L179.5,416.8 L185.1,416.2 L190.8,415.6 L196.4,415.1 L202.0,414.7 L207.6,414.3 L213.2,414.0 L218.9,413.7 L224.5,413.6 L230.1,413.4 L235.8,413.3 L241.4,413.3 L247.0,413.3" stroke="#6eaae2" stroke-width="1.0"/>
<path d="M22.0,463.2 L27.6,460.8 L33.2,458.5 L38.9,456.3 L44.5,454.1 L50.1,452.0 L55.8,449.9 L61.4,447.9 L67.0,446.0 L72.6,444.1 L78.2,442.3 L83.9,440.5 L89.5,438.8 L95.1,437.2 L100.8,435.6 L106.4,434.1 L112.0,432.7 L117.6,431.3 L123.2,430.0 L128.9,428.7 L134.5,427.5 L140.1,426.4 L145.8,425.3 L151.4,424.3 L157.0,423.4 L162.6,422.5 L168.2,421.7 L173.9,420.9 L179.5,420.2 L185.1,419.6 L190.8,419.0 L196.4,418.5 L202.0,418.0 L207.6,417.6 L213.2,417.3 L218.9,417.0 L224.5,416.8 L230.1,416.7 L235.8,416.6 L241.4,416.6 L247.0,416.6" stroke="#6eaae2" stroke-width="1.0"/>
<path d="M22.0,468.4 L27.6,465.9 L33.2,463.5 L38.9,461.2 L44.5,458.9 L50.1,456.7 L55.8,454.6 L61.4,452.5 L67.0,450.5 L72.6,448.5 L78.2,446.6 L83.9,444.8 L89.5,443.1 L95.1,441.4 L100.8,439.7 L106.4,438.2 L112.0,436.7 L117.6,435.3 L123.2,433.9 L128.9,432.6 L134.5,431.3 L140.1,430.2 L145.8,429.0 L151.4,428.0 L157.0,427.0 L162.6,426.1 L168.2,425.2 L173.9,424.5 L179.5,423.7 L185.1,423.1 L190.8,422.5 L196.4,421.9 L202.0,421.5 L207.6,421.1 L213.2,420.7 L218.9,420.5 L224.5,420.2 L230.1,420.1 L235.8,420.0 L241.4,420.0 L247.0,420.0" stroke="#6eaae2" stroke-width="1.0"/>
<path d="M158.0,418.0 L158.0,424.2 L158.0,430.5 L158.0,436.8 L158.1,443.0 L158.1,449.2 L158.2,455.5 L158.3,461.8 L158.5,468.0 L158.7,474.2 L158.9,480.5 L159.2,486.8 L159.6,493.0 L160.1,499.2 L160.6,505.5 L161.2,511.8 L161.8,518.0 L162.6,524.2 L163.5,530.5 L164.4,536.8 L165.5,543.0 L166.7,549.2 L168.0,555.5 L169.4,561.8 L171.0,568.0 L172.6,574.2 L174.5,580.5 L176.5,586.8 L178.6,593.0 L180.9,599.2 L183.3,605.5 L185.9,611.8 L188.7,618.0 L191.7,624.2 L194.8,630.5 L198.2,636.8 L201.7,643.0 L205.5,649.2 L209.4,655.5 L213.6,661.8 L218.0,668.0" stroke="#6eaae2" stroke-width="1.4"/>
<path d="M165.2,418.0 L165.4,424.2 L165.6,430.5 L165.8,436.8 L166.0,443.0 L166.3,449.2 L166.6,455.5 L166.9,461.8 L167.2,468.0 L167.7,474.2 L168.1,480.5 L168.7,486.8 L169.3,493.0 L170.0,499.2 L170.7,505.5 L171.6,511.8 L172.6,518.0 L173.6,524.2 L174.8,530.5 L176.1,536.8 L177.4,543.0 L179.0,549.2 L180.6,555.5 L182.4,561.8 L184.4,568.0 L186.5,574.2 L188.7,580.5 L191.2,586.8 L193.8,593.0 L196.6,599.2 L199.5,605.5 L202.7,611.8 L206.0,618.0 L209.6,624.2 L213.3,630.5 L217.3,636.8 L221.5,643.0 L226.0,649.2 L230.6,655.5 L235.5,661.8 L240.7,668.0" stroke="#6eaae2" stroke-width="1.4"/>
<path d="M172.4,418.0 L172.8,424.2 L173.2,430.5 L173.6,436.8 L174.0,443.0 L174.4,449.2 L174.9,455.5 L175.4,461.8 L176.0,468.0 L176.6,474.2 L177.3,480.5 L178.1,486.8 L179.0,493.0 L179.9,499.2 L180.9,505.5 L182.0,511.8 L183.3,518.0 L184.6,524.2 L186.1,530.5 L187.7,536.8 L189.4,543.0 L191.3,549.2 L193.3,555.5 L195.5,561.8 L197.8,568.0 L200.3,574.2 L203.0,580.5 L205.9,586.8 L209.0,593.0 L212.2,599.2 L215.7,605.5 L219.4,611.8 L223.3,618.0 L227.5,624.2 L231.8,630.5 L236.4,636.8 L241.3,643.0 L246.4,649.2 L251.8,655.5 L257.5,661.8 L263.4,668.0" stroke="#6eaae2" stroke-width="1.4"/>
<path d="M179.6,418.0 L180.2,424.2 L180.7,430.5 L181.3,436.8 L181.9,443.0 L182.6,449.2 L183.3,455.5 L184.0,461.8 L184.8,468.0 L185.6,474.2 L186.5,480.5 L187.5,486.8 L188.6,493.0 L189.8,499.2 L191.1,505.5 L192.5,511.8 L194.0,518.0 L195.6,524.2 L197.4,530.5 L199.3,536.8 L201.3,543.0 L203.6,549.2 L206.0,555.5 L208.5,561.8 L211.2,568.0 L214.2,574.2 L217.3,580.5 L220.6,586.8 L224.2,593.0 L227.9,599.2 L231.9,605.5 L236.1,611.8 L240.6,618.0 L245.3,624.2 L250.3,630.5 L255.6,636.8 L261.1,643.0 L266.9,649.2 L273.0,655.5 L279.4,661.8 L286.1,668.0" stroke="#6eaae2" stroke-width="1.4"/>
<path d="M186.8,418.0 L187.6,424.2 L188.3,430.5 L189.1,436.8 L189.9,443.0 L190.7,449.2 L191.6,455.5 L192.5,461.8 L193.5,468.0 L194.6,474.2 L195.7,480.5 L197.0,486.8 L198.3,493.0 L199.7,499.2 L201.2,505.5 L202.9,511.8 L204.7,518.0 L206.6,524.2 L208.7,530.5 L210.9,536.8 L213.3,543.0 L215.9,549.2 L218.6,555.5 L221.5,561.8 L224.7,568.0 L228.0,574.2 L231.6,580.5 L235.3,586.8 L239.4,593.0 L243.6,599.2 L248.1,605.5 L252.9,611.8 L257.9,618.0 L263.2,624.2 L268.8,630.5 L274.7,636.8 L280.9,643.0 L287.4,649.2 L294.2,655.5 L301.3,661.8 L308.8,668.0" stroke="#6eaae2" stroke-width="1.4"/>
<path d="M194.0,418.0 L194.9,424.2 L195.9,430.5 L196.9,436.8 L197.8,443.0 L198.9,449.2 L200.0,455.5 L201.1,461.8 L202.3,468.0 L203.6,474.2 L204.9,480.5 L206.4,486.8 L207.9,493.0 L209.6,499.2 L211.4,505.5 L213.3,511.8 L215.4,518.0 L217.6,524.2 L220.0,530.5 L222.5,536.8 L225.2,543.0 L228.2,549.2 L231.3,555.5 L234.6,561.8 L238.1,568.0 L241.9,574.2 L245.8,580.5 L250.1,586.8 L254.5,593.0 L259.3,599.2 L264.3,605.5 L269.6,611.8 L275.2,618.0 L281.1,624.2 L287.3,630.5 L293.8,636.8 L300.6,643.0 L307.8,649.2 L315.4,655.5 L323.2,661.8 L331.5,668.0" stroke="#6eaae2" stroke-width="1.4"/>
<path d="M201.2,418.0 L202.3,424.2 L203.5,430.5 L204.6,436.8 L205.8,443.0 L207.0,449.2 L208.3,455.5 L209.7,461.8 L211.1,468.0 L212.6,474.2 L214.1,480.5 L215.8,486.8 L217.6,493.0 L219.5,499.2 L221.6,505.5 L223.8,511.8 L226.1,518.0 L228.6,524.2 L231.3,530.5 L234.1,536.8 L237.2,543.0 L240.5,549.2 L243.9,555.5 L247.6,561.8 L251.5,568.0 L255.7,574.2 L260.1,580.5 L264.8,586.8 L269.7,593.0 L275.0,599.2 L280.5,605.5 L286.3,611.8 L292.5,618.0 L299.0,624.2 L305.8,630.5 L312.9,636.8 L320.4,643.0 L328.3,649.2 L336.5,655.5 L345.2,661.8 L354.2,668.0" stroke="#6eaae2" stroke-width="1.4"/>
<path d="M208.4,418.0 L209.7,424.2 L211.0,430.5 L212.4,436.8 L213.8,443.0 L215.2,449.2 L216.7,455.5 L218.2,461.8 L219.8,468.0 L221.5,474.2 L223.3,480.5 L225.2,486.8 L227.3,493.0 L229.4,499.2 L231.7,505.5 L234.2,511.8 L236.8,518.0 L239.6,524.2 L242.6,530.5 L245.8,536.8 L249.2,543.0 L252.7,549.2 L256.6,555.5 L260.6,561.8 L265.0,568.0 L269.5,574.2 L274.4,580.5 L279.5,586.8 L284.9,593.0 L290.7,599.2 L296.7,605.5 L303.1,611.8 L309.8,618.0 L316.8,624.2 L324.3,630.5 L332.0,636.8 L340.2,643.0 L348.8,649.2 L357.7,655.5 L367.1,661.8 L376.9,668.0" stroke="#6eaae2" stroke-width="1.4"/>
<path d="M215.6,418.0 L217.1,424.2 L218.6,430.5 L220.2,436.8 L221.7,443.0 L223.3,449.2 L225.0,455.5 L226.8,461.8 L228.6,468.0 L230.5,474.2 L232.5,480.5 L234.7,486.8 L236.9,493.0 L239.4,499.2 L241.9,505.5 L244.6,511.8 L247.5,518.0 L250.6,524.2 L253.9,530.5 L257.4,536.8 L261.1,543.0 L265.0,549.2 L269.2,555.5 L273.7,561.8 L278.4,568.0 L283.4,574.2 L288.7,580.5 L294.2,586.8 L300.1,593.0 L306.4,599.2 L312.9,605.5 L319.8,611.8 L327.1,618.0 L334.7,624.2 L342.8,630.5 L351.2,636.8 L360.0,643.0 L369.2,649.2 L378.9,655.5 L389.0,661.8 L399.6,668.0" stroke="#6eaae2" stroke-width="1.4"/>
<path d="M222.8,418.0 L224.5,424.2 L226.2,430.5 L227.9,436.8 L229.7,443.0 L231.5,449.2 L233.4,455.5 L235.3,461.8 L237.4,468.0 L239.5,474.2 L241.7,480.5 L244.1,486.8 L246.6,493.0 L249.3,499.2 L252.1,505.5 L255.1,511.8 L258.2,518.0 L261.6,524.2 L265.2,530.5 L269.0,536.8 L273.1,543.0 L277.3,549.2 L281.9,555.5 L286.7,561.8 L291.8,568.0 L297.2,574.2 L302.9,580.5 L309.0,586.8 L315.3,593.0 L322.0,599.2 L329.1,605.5 L336.6,611.8 L344.4,618.0 L352.6,624.2 L361.2,630.5 L370.3,636.8 L379.8,643.0 L389.7,649.2 L400.1,655.5 L411.0,661.8 L422.3,668.0" stroke="#6eaae2" stroke-width="1.4"/>
<path d="M230.0,418.0 L231.9,424.2 L233.8,430.5 L235.7,436.8 L237.6,443.0 L239.6,449.2 L241.7,455.5 L243.9,461.8 L246.1,468.0 L248.5,474.2 L250.9,480.5 L253.5,486.8 L256.3,493.0 L259.2,499.2 L262.3,505.5 L265.5,511.8 L269.0,518.0 L272.6,524.2 L276.5,530.5 L280.6,536.8 L285.0,543.0 L289.6,549.2 L294.5,555.5 L299.7,561.8 L305.2,568.0 L311.1,574.2 L317.2,580.5 L323.7,586.8 L330.5,593.0 L337.7,599.2 L345.3,605.5 L353.3,611.8 L361.7,618.0 L370.5,624.2 L379.7,630.5 L389.4,636.8 L399.6,643.0 L410.2,649.2 L421.3,655.5 L432.9,661.8 L445.0,668.0" stroke="#6eaae2" stroke-width="1.4"/>
<path d="M237.2,418.0 L239.3,424.2 L241.3,430.5 L243.4,436.8 L245.6,443.0 L247.8,449.2 L250.1,455.5 L252.4,461.8 L254.9,468.0 L257.4,474.2 L260.1,480.5 L263.0,486.8 L265.9,493.0 L269.1,499.2 L272.4,505.5 L275.9,511.8 L279.7,518.0 L283.6,524.2 L287.8,530.5 L292.2,536.8 L296.9,543.0 L301.9,549.2 L307.2,555.5 L312.8,561.8 L318.7,568.0 L324.9,574.2 L331.5,580.5 L338.4,586.8 L345.7,593.0 L353.4,599.2 L361.5,605.5 L370.0,611.8 L379.0,618.0 L388.4,624.2 L398.2,630.5 L408.5,636.8 L419.3,643.0 L430.6,649.2 L442.5,655.5 L454.8,661.8 L467.7,668.0" stroke="#6eaae2" stroke-width="1.4"/>
<path d="M244.4,418.0 L246.7,424.2 L248.9,430.5 L251.2,436.8 L253.6,443.0 L256.0,449.2 L258.4,455.5 L261.0,461.8 L263.6,468.0 L266.4,474.2 L269.3,480.5 L272.4,486.8 L275.6,493.0 L279.0,499.2 L282.6,505.5 L286.4,511.8 L290.4,518.0 L294.6,524.2 L299.1,530.5 L303.9,536.8 L308.9,543.0 L314.2,549.2 L319.9,555.5 L325.8,561.8 L332.1,568.0 L338.7,574.2 L345.7,580.5 L353.1,586.8 L360.9,593.0 L369.1,599.2 L377.7,605.5 L386.8,611.8 L396.3,618.0 L406.2,624.2 L416.7,630.5 L427.7,636.8 L439.1,643.0 L451.1,649.2 L463.7,655.5 L476.7,661.8 L490.4,668.0" stroke="#6eaae2" stroke-width="1.4"/>
<path d="M251.6,418.0 L254.0,424.2 L256.5,430.5 L259.0,436.8 L261.5,443.0 L264.1,449.2 L266.8,455.5 L269.5,461.8 L272.4,468.0 L275.4,474.2 L278.5,480.5 L281.8,486.8 L285.3,493.0 L288.9,499.2 L292.8,505.5 L296.8,511.8 L301.1,518.0 L305.6,524.2 L310.4,530.5 L315.5,536.8 L320.9,543.0 L326.5,549.2 L332.5,555.5 L338.8,561.8 L345.5,568.0 L352.6,574.2 L360.0,580.5 L367.9,586.8 L376.1,593.0 L384.8,599.2 L393.9,605.5 L403.5,611.8 L413.6,618.0 L424.1,624.2 L435.2,630.5 L446.8,636.8 L458.9,643.0 L471.6,649.2 L484.8,655.5 L498.7,661.8 L513.1,668.0" stroke="#6eaae2" stroke-width="1.4"/>
<path d="M777.0,271.0 L783.4,270.8 L789.7,270.7 L796.1,270.7 L802.5,270.7 L808.8,270.8 L815.2,271.0 L821.6,271.2 L827.9,271.6 L834.3,272.0 L840.7,272.5 L847.0,273.1 L853.4,273.7 L859.8,274.5 L866.1,275.3 L872.5,276.2 L878.9,277.3 L885.2,278.4 L891.6,279.5 L898.0,280.8 L904.3,282.2 L910.7,283.6 L917.1,285.1 L923.4,286.7 L929.8,288.4 L936.2,290.1 L942.5,292.0 L948.9,293.9 L955.3,295.8 L961.6,297.9 L968.0,300.0" stroke="#6eaae2" stroke-width="1.1"/>
<path d="M777.0,275.6 L783.4,275.4 L789.7,275.3 L796.1,275.3 L802.5,275.3 L808.8,275.4 L815.2,275.6 L821.6,275.9 L827.9,276.3 L834.3,276.7 L840.7,277.2 L847.0,277.8 L853.4,278.5 L859.8,279.3 L866.1,280.2 L872.5,281.2 L878.9,282.2 L885.2,283.4 L891.6,284.6 L898.0,285.9 L904.3,287.3 L910.7,288.8 L917.1,290.4 L923.4,292.1 L929.8,293.8 L936.2,295.6 L942.5,297.5 L948.9,299.5 L955.3,301.6 L961.6,303.7 L968.0,305.9" stroke="#6eaae2" stroke-width="1.1"/>
<path d="M777.0,280.2 L783.4,280.0 L789.7,279.9 L796.1,279.9 L802.5,279.9 L808.8,280.1 L815.2,280.3 L821.6,280.6 L827.9,281.0 L834.3,281.4 L840.7,282.0 L847.0,282.6 L853.4,283.4 L859.8,284.2 L866.1,285.1 L872.5,286.1 L878.9,287.2 L885.2,288.4 L891.6,289.7 L898.0,291.0 L904.3,292.5 L910.7,294.1 L917.1,295.7 L923.4,297.4 L929.8,299.2 L936.2,301.1 L942.5,303.1 L948.9,305.2 L955.3,307.3 L961.6,309.5 L968.0,311.8" stroke="#6eaae2" stroke-width="1.1"/>
<path d="M777.0,284.8 L783.4,284.6 L789.7,284.5 L796.1,284.5 L802.5,284.6 L808.8,284.7 L815.2,284.9 L821.6,285.3 L827.9,285.7 L834.3,286.1 L840.7,286.7 L847.0,287.4 L853.4,288.2 L859.8,289.0 L866.1,290.0 L872.5,291.0 L878.9,292.2 L885.2,293.4 L891.6,294.7 L898.0,296.2 L904.3,297.7 L910.7,299.3 L917.1,301.0 L923.4,302.8 L929.8,304.7 L936.2,306.6 L942.5,308.7 L948.9,310.8 L955.3,313.0 L961.6,315.3 L968.0,317.7" stroke="#6eaae2" stroke-width="1.1"/>
<path d="M777.0,289.4 L783.4,289.2 L789.7,289.1 L796.1,289.1 L802.5,289.2 L808.8,289.3 L815.2,289.6 L821.6,289.9 L827.9,290.3 L834.3,290.9 L840.7,291.5 L847.0,292.2 L853.4,293.0 L859.8,293.9 L866.1,294.9 L872.5,295.9 L878.9,297.1 L885.2,298.4 L891.6,299.8 L898.0,301.3 L904.3,302.9 L910.7,304.5 L917.1,306.3 L923.4,308.2 L929.8,310.1 L936.2,312.2 L942.5,314.3 L948.9,316.5 L955.3,318.8 L961.6,321.1 L968.0,323.6" stroke="#6eaae2" stroke-width="1.1"/>
<path d="M777.0,294.0 L783.4,293.8 L789.7,293.7 L796.1,293.7 L802.5,293.8 L808.8,294.0 L815.2,294.2 L821.6,294.6 L827.9,295.0 L834.3,295.6 L840.7,296.2 L847.0,296.9 L853.4,297.8 L859.8,298.7 L866.1,299.7 L872.5,300.9 L878.9,302.1 L885.2,303.4 L891.6,304.9 L898.0,306.4 L904.3,308.0 L910.7,309.8 L917.1,311.6 L923.4,313.5 L929.8,315.5 L936.2,317.7 L942.5,319.9 L948.9,322.1 L955.3,324.5 L961.6,327.0 L968.0,329.5" stroke="#6eaae2" stroke-width="1.1"/>
<path d="M777.0,298.6 L783.4,298.4 L789.7,298.3 L796.1,298.3 L802.5,298.4 L808.8,298.6 L815.2,298.9 L821.6,299.3 L827.9,299.7 L834.3,300.3 L840.7,301.0 L847.0,301.7 L853.4,302.6 L859.8,303.6 L866.1,304.6 L872.5,305.8 L878.9,307.1 L885.2,308.5 L891.6,309.9 L898.0,311.5 L904.3,313.2 L910.7,315.0 L917.1,316.9 L923.4,318.9 L929.8,321.0 L936.2,323.2 L942.5,325.4 L948.9,327.8 L955.3,330.2 L961.6,332.8 L968.0,335.4" stroke="#6eaae2" stroke-width="1.1"/>
<path d="M777.0,303.2 L783.4,303.0 L789.7,303.0 L796.1,303.0 L802.5,303.1 L808.8,303.3 L815.2,303.5 L821.6,303.9 L827.9,304.4 L834.3,305.0 L840.7,305.7 L847.0,306.5 L853.4,307.4 L859.8,308.4 L866.1,309.5 L872.5,310.7 L878.9,312.0 L885.2,313.5 L891.6,315.0 L898.0,316.7 L904.3,318.4 L910.7,320.3 L917.1,322.2 L923.4,324.3 L929.8,326.4 L936.2,328.7 L942.5,331.0 L948.9,333.4 L955.3,336.0 L961.6,338.6 L968.0,341.3" stroke="#6eaae2" stroke-width="1.1"/>
<path d="M777.0,307.8 L783.4,307.6 L789.7,307.6 L796.1,307.6 L802.5,307.7 L808.8,307.9 L815.2,308.2 L821.6,308.6 L827.9,309.1 L834.3,309.7 L840.7,310.4 L847.0,311.3 L853.4,312.2 L859.8,313.2 L866.1,314.4 L872.5,315.6 L878.9,317.0 L885.2,318.5 L891.6,320.1 L898.0,321.8 L904.3,323.6 L910.7,325.5 L917.1,327.5 L923.4,329.6 L929.8,331.8 L936.2,334.2 L942.5,336.6 L948.9,339.1 L955.3,341.7 L961.6,344.4 L968.0,347.2" stroke="#6eaae2" stroke-width="1.1"/>
<path d="M777.0,312.4 L783.4,312.2 L789.7,312.2 L796.1,312.2 L802.5,312.3 L808.8,312.5 L815.2,312.9 L821.6,313.3 L827.9,313.8 L834.3,314.4 L840.7,315.2 L847.0,316.0 L853.4,317.0 L859.8,318.1 L866.1,319.3 L872.5,320.6 L878.9,322.0 L885.2,323.5 L891.6,325.1 L898.0,326.9 L904.3,328.8 L910.7,330.7 L917.1,332.8 L923.4,335.0 L929.8,337.3 L936.2,339.7 L942.5,342.2 L948.9,344.7 L955.3,347.4 L961.6,350.2 L968.0,353.1" stroke="#6eaae2" stroke-width="1.1"/>
<path d="M777.0,317.0 L783.4,316.8 L789.7,316.8 L796.1,316.8 L802.5,316.9 L808.8,317.2 L815.2,317.5 L821.6,317.9 L827.9,318.5 L834.3,319.2 L840.7,319.9 L847.0,320.8 L853.4,321.8 L859.8,322.9 L866.1,324.2 L872.5,325.5 L878.9,327.0 L885.2,328.5 L891.6,330.2 L898.0,332.0 L904.3,333.9 L910.7,336.0 L917.1,338.1 L923.4,340.3 L929.8,342.7 L936.2,345.2 L942.5,347.7 L948.9,350.4 L955.3,353.2 L961.6,356.0 L968.0,359.0" stroke="#6eaae2" stroke-width="1.1"/>
<path d="M777.0,321.6 L783.4,321.4 L789.7,321.4 L796.1,321.4 L802.5,321.6 L808.8,321.8 L815.2,322.2 L821.6,322.6 L827.9,323.2 L834.3,323.9 L840.7,324.7 L847.0,325.6 L853.4,326.6 L859.8,327.8 L866.1,329.0 L872.5,330.4 L878.9,331.9 L885.2,333.5 L891.6,335.3 L898.0,337.1 L904.3,339.1 L910.7,341.2 L917.1,343.4 L923.4,345.7 L929.8,348.1 L936.2,350.7 L942.5,353.3 L948.9,356.1 L955.3,358.9 L961.6,361.9 L968.0,364.9" stroke="#6eaae2" stroke-width="1.1"/>
<path d="M777.0,326.2 L783.4,326.0 L789.7,326.0 L796.1,326.0 L802.5,326.2 L808.8,326.4 L815.2,326.8 L821.6,327.3 L827.9,327.9 L834.3,328.6 L840.7,329.4 L847.0,330.4 L853.4,331.4 L859.8,332.6 L866.1,333.9 L872.5,335.4 L878.9,336.9 L885.2,338.6 L891.6,340.4 L898.0,342.3 L904.3,344.3 L910.7,346.4 L917.1,348.7 L923.4,351.1 L929.8,353.6 L936.2,356.2 L942.5,358.9 L948.9,361.7 L955.3,364.6 L961.6,367.7 L968.0,370.8" stroke="#6eaae2" stroke-width="1.1"/>
<path d="M777.0,330.8 L783.4,330.6 L789.7,330.6 L796.1,330.6 L802.5,330.8 L808.8,331.1 L815.2,331.5 L821.6,332.0 L827.9,332.6 L834.3,333.3 L840.7,334.2 L847.0,335.1 L853.4,336.2 L859.8,337.5 L866.1,338.8 L872.5,340.3 L878.9,341.9 L885.2,343.6 L891.6,345.4 L898.0,347.4 L904.3,349.5 L910.7,351.7 L917.1,354.0 L923.4,356.4 L929.8,359.0 L936.2,361.7 L942.5,364.5 L948.9,367.4 L955.3,370.4 L961.6,373.5 L968.0,376.7" stroke="#6eaae2" stroke-width="1.1"/>
<path d="M777.0,335.4 L783.4,335.2 L789.7,335.2 L796.1,335.3 L802.5,335.4 L808.8,335.7 L815.2,336.1 L821.6,336.6 L827.9,337.3 L834.3,338.0 L840.7,338.9 L847.0,339.9 L853.4,341.0 L859.8,342.3 L866.1,343.7 L872.5,345.2 L878.9,346.8 L885.2,348.6 L891.6,350.5 L898.0,352.5 L904.3,354.6 L910.7,356.9 L917.1,359.3 L923.4,361.8 L929.8,364.4 L936.2,367.2 L942.5,370.0 L948.9,373.0 L955.3,376.1 L961.6,379.3 L968.0,382.6" stroke="#6eaae2" stroke-width="1.1"/>
<path d="M777.0,340.0 L783.4,339.8 L789.7,339.8 L796.1,339.9 L802.5,340.0 L808.8,340.3 L815.2,340.8 L821.6,341.3 L827.9,342.0 L834.3,342.7 L840.7,343.7 L847.0,344.7 L853.4,345.9 L859.8,347.2 L866.1,348.6 L872.5,350.1 L878.9,351.8 L885.2,353.6 L891.6,355.6 L898.0,357.6 L904.3,359.8 L910.7,362.1 L917.1,364.6 L923.4,367.2 L929.8,369.9 L936.2,372.7 L942.5,375.6 L948.9,378.7 L955.3,381.8 L961.6,385.1 L968.0,388.5" stroke="#6eaae2" stroke-width="1.1"/>
<path d="M777.0,357.0 L781.2,356.5 L787.0,355.8 L793.9,355.0 L801.4,354.1 L809.2,353.1 L816.7,352.3 L823.6,351.6 L829.3,351.0 L834.1,350.6 L838.3,350.3 L842.2,350.0 L845.7,349.9 L848.9,349.8 L851.8,349.8 L854.5,349.9 L857.0,350.0 L859.2,350.2 L861.1,350.6 L862.7,351.0 L864.0,351.6 L865.1,352.1 L866.1,352.7 L867.1,353.4 L868.0,354.0 L868.9,354.6 L869.7,355.1 L870.4,355.7 L870.9,356.2 L871.4,356.9 L871.7,357.8 L871.9,358.8 L872.0,360.0 L871.9,361.5 L871.7,363.3 L871.3,365.2 L870.8,367.3 L870.1,369.5 L869.5,371.7 L868.7,373.9 L868.0,376.0 L867.1,378.1 L866.0,380.2 L864.8,382.3 L863.6,384.4 L862.4,386.6 L861.3,388.7 L860.5,390.9 L860.0,393.0 L859.8,395.1 L859.7,397.1 L859.9,399.1 L860.2,401.1 L860.7,403.1 L861.3,405.3 L862.1,407.5 L863.0,410.0 L864.2,412.8 L865.9,416.0 L867.7,419.5 L869.7,423.0 L871.6,426.3 L873.4,429.4 L874.9,431.9 L876.0,433.8" stroke="#6eaae2" stroke-width="1.1"/>
<path d="M777.0,355.4 L781.8,355.0 L788.5,354.5 L796.4,353.8 L805.1,353.1 L814.1,352.4 L822.7,351.7 L830.6,351.1 L837.1,350.7 L842.6,350.4 L847.4,350.1 L851.8,349.8 L855.7,349.7 L859.3,349.5 L862.5,349.5 L865.5,349.6 L868.2,349.7 L870.6,349.9 L872.5,350.3 L874.1,350.7 L875.4,351.2 L876.5,351.8 L877.4,352.4 L878.3,353.1 L879.2,353.7 L880.1,354.3 L880.9,354.9 L881.6,355.5 L882.1,356.1 L882.6,356.8 L882.9,357.7 L883.1,358.7 L883.2,360.0 L883.1,361.5 L882.9,363.3 L882.5,365.2 L882.0,367.3 L881.3,369.5 L880.7,371.7 L879.9,373.9 L879.2,376.0 L878.3,378.1 L877.2,380.2 L876.0,382.3 L874.8,384.4 L873.6,386.6 L872.5,388.7 L871.7,390.9 L871.2,393.0 L871.0,395.1 L870.9,397.2 L871.1,399.3 L871.4,401.4 L871.9,403.5 L872.5,405.6 L873.3,407.8 L874.2,410.0 L875.4,412.4 L877.1,415.0 L878.9,417.7 L880.9,420.4 L882.8,423.0 L884.6,425.3 L886.1,427.3 L887.2,428.7" stroke="#6eaae2" stroke-width="1.1"/>
<path d="M777.0,353.8 L782.5,353.5 L790.0,353.1 L799.0,352.7 L808.8,352.2 L819.0,351.6 L828.8,351.2 L837.6,350.7 L845.0,350.4 L851.0,350.1 L856.5,349.9 L861.4,349.6 L865.8,349.4 L869.7,349.3 L873.2,349.2 L876.4,349.3 L879.4,349.4 L881.9,349.6 L884.0,350.0 L885.5,350.4 L886.8,350.9 L887.8,351.5 L888.7,352.1 L889.5,352.7 L890.4,353.4 L891.3,354.0 L892.1,354.6 L892.8,355.3 L893.3,355.9 L893.8,356.7 L894.1,357.6 L894.3,358.7 L894.4,360.0 L894.3,361.5 L894.1,363.3 L893.7,365.3 L893.1,367.4 L892.5,369.5 L891.9,371.7 L891.1,373.9 L890.4,376.0 L889.5,378.1 L888.4,380.2 L887.2,382.3 L886.0,384.4 L884.8,386.6 L883.7,388.7 L882.9,390.9 L882.4,393.0 L882.2,395.1 L882.1,397.3 L882.3,399.5 L882.6,401.7 L883.1,403.9 L883.7,406.0 L884.5,408.0 L885.4,410.0 L886.6,412.0 L888.3,414.0 L890.1,416.0 L892.1,417.9 L894.0,419.7 L895.8,421.3 L897.3,422.6 L898.4,423.6" stroke="#6eaae2" stroke-width="1.1"/>
<path d="M777.0,352.2 L783.1,352.0 L791.5,351.8 L801.6,351.5 L812.5,351.2 L823.8,350.9 L834.8,350.6 L844.6,350.3 L852.8,350.1 L859.5,349.9 L865.6,349.7 L871.0,349.4 L875.8,349.2 L880.1,349.1 L883.9,349.0 L887.4,349.0 L890.6,349.1 L893.3,349.3 L895.4,349.7 L897.0,350.1 L898.2,350.6 L899.2,351.2 L900.0,351.8 L900.7,352.4 L901.6,353.1 L902.5,353.8 L903.3,354.4 L904.0,355.1 L904.5,355.8 L905.0,356.6 L905.3,357.6 L905.5,358.7 L905.6,360.0 L905.5,361.6 L905.3,363.3 L904.9,365.3 L904.4,367.4 L903.7,369.5 L903.1,371.7 L902.3,373.9 L901.6,376.0 L900.7,378.1 L899.6,380.2 L898.4,382.3 L897.2,384.4 L896.0,386.6 L894.9,388.7 L894.1,390.9 L893.6,393.0 L893.4,395.2 L893.3,397.4 L893.5,399.7 L893.8,402.0 L894.3,404.2 L894.9,406.3 L895.7,408.3 L896.6,410.0 L897.8,411.5 L899.5,412.9 L901.3,414.2 L903.3,415.3 L905.2,416.3 L907.0,417.2 L908.5,417.9 L909.6,418.5" stroke="#6eaae2" stroke-width="1.1"/>
<path d="M777.0,350.6 L783.7,350.5 L793.0,350.5 L804.1,350.4 L816.3,350.3 L828.7,350.1 L840.8,350.0 L851.7,349.9 L860.7,349.8 L868.0,349.7 L874.6,349.4 L880.5,349.2 L885.8,349.0 L890.4,348.8 L894.6,348.7 L898.4,348.7 L901.8,348.8 L904.7,349.0 L906.8,349.4 L908.4,349.8 L909.6,350.3 L910.5,350.8 L911.2,351.5 L912.0,352.1 L912.8,352.8 L913.7,353.5 L914.5,354.2 L915.2,354.9 L915.7,355.7 L916.2,356.5 L916.5,357.5 L916.7,358.7 L916.8,360.0 L916.7,361.6 L916.5,363.4 L916.1,365.3 L915.5,367.4 L914.9,369.5 L914.3,371.7 L913.5,373.9 L912.8,376.0 L911.9,378.1 L910.8,380.2 L909.6,382.3 L908.4,384.4 L907.2,386.6 L906.1,388.7 L905.3,390.9 L904.8,393.0 L904.6,395.2 L904.5,397.6 L904.7,400.0 L905.0,402.3 L905.5,404.6 L906.1,406.7 L906.9,408.5 L907.8,410.0 L909.0,411.1 L910.7,411.9 L912.5,412.4 L914.5,412.8 L916.4,413.0 L918.2,413.1 L919.7,413.3 L920.8,413.4" stroke="#6eaae2" stroke-width="1.1"/>
<path d="M777.0,349.0 L784.4,349.0 L794.5,349.1 L806.7,349.2 L820.0,349.3 L833.6,349.4 L846.8,349.5 L858.7,349.5 L868.5,349.5 L876.5,349.4 L883.7,349.2 L890.1,349.0 L895.8,348.8 L900.8,348.6 L905.3,348.4 L909.4,348.4 L913.0,348.5 L916.0,348.7 L918.3,349.1 L919.9,349.5 L921.0,350.0 L921.9,350.5 L922.5,351.1 L923.2,351.8 L924.0,352.5 L924.9,353.2 L925.7,353.9 L926.4,354.7 L926.9,355.5 L927.4,356.4 L927.7,357.4 L927.9,358.6 L928.0,360.0 L927.9,361.6 L927.7,363.4 L927.3,365.3 L926.8,367.4 L926.1,369.6 L925.5,371.7 L924.7,373.9 L924.0,376.0 L923.1,378.1 L922.0,380.2 L920.8,382.3 L919.6,384.4 L918.4,386.6 L917.3,388.7 L916.5,390.9 L916.0,393.0 L915.8,395.3 L915.7,397.7 L915.9,400.2 L916.2,402.7 L916.7,405.0 L917.3,407.1 L918.1,408.8 L919.0,410.0 L920.2,410.7 L921.9,410.9 L923.7,410.7 L925.7,410.2 L927.6,409.7 L929.4,409.1 L930.9,408.6 L932.0,408.3" stroke="#6eaae2" stroke-width="1.1"/>
<path d="M777.0,347.4 L785.0,347.6 L796.1,347.8 L809.2,348.1 L823.7,348.4 L838.5,348.7 L852.8,348.9 L865.7,349.1 L876.3,349.2 L885.0,349.2 L892.8,349.0 L899.7,348.8 L905.8,348.6 L911.2,348.3 L916.0,348.2 L920.3,348.1 L924.2,348.2 L927.4,348.4 L929.7,348.8 L931.3,349.2 L932.4,349.7 L933.2,350.2 L933.8,350.8 L934.4,351.5 L935.2,352.2 L936.1,352.9 L936.9,353.7 L937.6,354.5 L938.1,355.3 L938.6,356.3 L938.9,357.4 L939.1,358.6 L939.2,360.0 L939.1,361.6 L938.9,363.4 L938.5,365.4 L938.0,367.4 L937.3,369.6 L936.7,371.7 L935.9,373.9 L935.2,376.0 L934.3,378.1 L933.2,380.2 L932.0,382.3 L930.8,384.4 L929.6,386.6 L928.5,388.7 L927.7,390.9 L927.2,393.0 L927.0,395.3 L926.9,397.8 L927.1,400.4 L927.4,403.0 L927.9,405.4 L928.5,407.4 L929.3,409.0 L930.2,410.0 L931.4,410.2 L933.1,409.8 L934.9,408.9 L936.9,407.7 L938.8,406.3 L940.6,405.0 L942.1,403.9 L943.2,403.2" stroke="#6eaae2" stroke-width="1.1"/>
<path d="M777.0,345.8 L785.7,346.1 L797.6,346.5 L811.8,346.9 L827.4,347.4 L843.4,347.9 L858.8,348.3 L872.7,348.7 L884.2,348.9 L893.5,348.9 L901.9,348.8 L909.3,348.6 L915.8,348.3 L921.6,348.1 L926.7,347.9 L931.3,347.8 L935.4,347.9 L938.7,348.1 L941.1,348.5 L942.8,348.9 L943.9,349.3 L944.6,349.9 L945.1,350.5 L945.6,351.2 L946.4,351.9 L947.3,352.7 L948.1,353.5 L948.8,354.3 L949.3,355.2 L949.8,356.2 L950.1,357.3 L950.3,358.6 L950.4,360.0 L950.3,361.6 L950.1,363.4 L949.7,365.4 L949.1,367.4 L948.5,369.6 L947.9,371.7 L947.1,373.9 L946.4,376.0 L945.5,378.1 L944.4,380.2 L943.2,382.3 L942.0,384.4 L940.8,386.6 L939.7,388.7 L938.9,390.9 L938.4,393.0 L938.2,395.3 L938.1,397.9 L938.3,400.6 L938.6,403.3 L939.1,405.7 L939.7,407.8 L940.5,409.3 L941.4,410.0 L942.6,409.8 L944.3,408.8 L946.1,407.1 L948.1,405.1 L950.0,403.0 L951.8,400.9 L953.3,399.3 L954.4,398.1" stroke="#6eaae2" stroke-width="1.1"/>
<path d="M777.0,344.2 L786.3,344.6 L799.1,345.1 L814.4,345.8 L831.1,346.5 L848.3,347.2 L864.8,347.8 L879.7,348.3 L892.0,348.6 L902.0,348.7 L910.9,348.6 L918.8,348.4 L925.8,348.1 L932.0,347.8 L937.4,347.6 L942.3,347.5 L946.6,347.6 L950.1,347.8 L952.6,348.1 L954.2,348.5 L955.3,349.0 L955.9,349.6 L956.4,350.2 L956.9,350.9 L957.6,351.6 L958.5,352.4 L959.3,353.2 L960.0,354.1 L960.5,355.1 L961.0,356.1 L961.3,357.3 L961.5,358.6 L961.6,360.0 L961.5,361.6 L961.3,363.4 L960.9,365.4 L960.4,367.5 L959.7,369.6 L959.1,371.8 L958.3,373.9 L957.6,376.0 L956.7,378.1 L955.6,380.2 L954.4,382.3 L953.2,384.4 L952.0,386.6 L950.9,388.7 L950.1,390.9 L949.6,393.0 L949.4,395.4 L949.3,398.0 L949.5,400.9 L949.8,403.6 L950.3,406.1 L950.9,408.1 L951.7,409.5 L952.6,410.0 L953.8,409.4 L955.5,407.8 L957.3,405.4 L959.3,402.6 L961.2,399.7 L963.0,396.9 L964.5,394.6 L965.6,393.0" stroke="#6eaae2" stroke-width="1.1"/>
<path d="M777.0,342.6 L786.9,343.1 L800.6,343.8 L816.9,344.6 L834.8,345.5 L853.1,346.4 L870.8,347.2 L886.8,347.9 L899.9,348.3 L910.5,348.5 L920.0,348.4 L928.4,348.2 L935.8,347.9 L942.4,347.6 L948.1,347.4 L953.2,347.2 L957.8,347.3 L961.5,347.5 L964.0,347.8 L965.7,348.2 L966.7,348.7 L967.3,349.2 L967.6,349.9 L968.1,350.5 L968.8,351.3 L969.7,352.1 L970.5,353.0 L971.2,353.9 L971.7,354.9 L972.2,356.0 L972.5,357.2 L972.7,358.5 L972.8,360.0 L972.7,361.6 L972.5,363.5 L972.1,365.4 L971.5,367.5 L970.9,369.6 L970.3,371.8 L969.5,373.9 L968.8,376.0 L967.9,378.1 L966.8,380.2 L965.6,382.3 L964.4,384.4 L963.2,386.6 L962.1,388.7 L961.3,390.9 L960.8,393.0 L960.6,395.4 L960.5,398.2 L960.7,401.1 L961.0,403.9 L961.5,406.5 L962.1,408.5 L962.9,409.7 L963.8,410.0 L965.0,409.0 L966.7,406.7 L968.5,403.6 L970.5,400.0 L972.4,396.3 L974.2,392.8 L975.7,389.9 L976.8,387.9" stroke="#6eaae2" stroke-width="1.1"/>
<path d="M862.0,441.2 L968.0,476.2" stroke="#7fc0e6" stroke-width="0.9"/>
<path d="M869.0,438.0 L968.0,470.7" stroke="#7fc0e6" stroke-width="0.9"/>
<path d="M876.0,434.8 L968.0,465.2" stroke="#7fc0e6" stroke-width="0.9"/>
<path d="M883.0,431.6 L968.0,459.7" stroke="#7fc0e6" stroke-width="0.9"/>
<path d="M890.0,428.4 L968.0,454.2" stroke="#7fc0e6" stroke-width="0.9"/>
<path d="M897.0,425.3 L968.0,448.7" stroke="#7fc0e6" stroke-width="0.9"/>
<path d="M904.0,422.1 L968.0,443.2" stroke="#7fc0e6" stroke-width="0.9"/>
<path d="M911.0,418.9 L968.0,437.7" stroke="#7fc0e6" stroke-width="0.9"/>
<path d="M918.0,415.7 L968.0,432.2" stroke="#7fc0e6" stroke-width="0.9"/>
<path d="M925.0,412.5 L968.0,426.7" stroke="#7fc0e6" stroke-width="0.9"/>
<path d="M932.0,409.3 L968.0,421.2" stroke="#7fc0e6" stroke-width="0.9"/>
<path d="M939.0,406.1 L968.0,415.7" stroke="#7fc0e6" stroke-width="0.9"/>
<path d="M946.0,403.0 L968.0,410.2" stroke="#7fc0e6" stroke-width="0.9"/>
<path d="M953.0,399.8 L968.0,404.7" stroke="#7fc0e6" stroke-width="0.9"/>
<path d="M960.0,396.6 L968.0,399.2" stroke="#7fc0e6" stroke-width="0.9"/>
<path d="M862.0,441.2 Q909.7,456.9 968.0,504.1" stroke="#7fc0e6" stroke-width="0.9"/>
<path d="M869.5,437.8 Q913.8,453.1 968.0,499.0" stroke="#7fc0e6" stroke-width="0.9"/>
<path d="M877.0,434.4 Q918.0,449.2 968.0,493.9" stroke="#7fc0e6" stroke-width="0.9"/>
<path d="M884.5,430.9 Q922.1,445.4 968.0,488.8" stroke="#7fc0e6" stroke-width="0.9"/>
<path d="M892.0,427.5 Q926.2,441.6 968.0,483.7" stroke="#7fc0e6" stroke-width="0.9"/>
<path d="M899.5,424.1 Q930.3,437.7 968.0,478.6" stroke="#7fc0e6" stroke-width="0.9"/>
<path d="M907.0,420.7 Q934.5,433.9 968.0,473.5" stroke="#7fc0e6" stroke-width="0.9"/>
<path d="M914.5,417.3 Q938.6,430.1 968.0,468.4" stroke="#7fc0e6" stroke-width="0.9"/>
<path d="M922.0,413.9 Q942.7,426.2 968.0,463.3" stroke="#7fc0e6" stroke-width="0.9"/>
<path d="M929.5,410.5 Q946.8,422.4 968.0,458.2" stroke="#7fc0e6" stroke-width="0.9"/>
<path d="M937.0,407.1 Q951.0,418.6 968.0,453.1" stroke="#7fc0e6" stroke-width="0.9"/>
<path d="M944.5,403.6 Q955.1,414.7 968.0,448.0" stroke="#7fc0e6" stroke-width="0.9"/>
<path d="M952.0,400.2 Q959.2,410.9 968.0,442.9" stroke="#7fc0e6" stroke-width="0.9"/>
</g>
<path d="M777,469 C800,462 820,452 836,448 C860,440 880,428 905,420 C930,410 950,398 968,390 L968,399 C945,410 925,420 905,431 C880,443 860,448 836,452 C815,462 795,478 777,489 Z" fill="#6fd0e8"/>
<g fill="none" stroke="#44558a" stroke-width="0.8">
<path d="M47.5,161 V663.5 H941.5 V161"/>
</g>
</svg>
<!--/WAVES-->
<div id="filtry" class="a"></div>
<div id="wiz" class="a"></div>
<div id="dane" class="a"></div>
<div id="tabs" class="a"></div>
<div id="status" class="a"></div>
<div id="taskbar" class="a"></div>


<!-- title bar content -->
<svg class="a" style="left:0;top:76px" width="1024" height="18">
  <g fill="none" stroke="#c8c6c4" stroke-width="1">
    <rect x="8.5" y="5.5" width="9" height="9" rx="1"/>
    <rect x="10.5" y="5.5" width="5" height="3"/>
    <rect x="10.5" y="10.5" width="5" height="4"/>
    <path d="M26 6 v3.5 h3.5 M26.3 9.2 A4 4 0 1 1 28 14"/>
    <path d="M48 6 v3.5 h-3.5 M47.7 9.2 A4 4 0 1 0 46 14" stroke="#5f5e5c"/>
  </g>
  <circle cx="938.5" cy="8.5" r="5" fill="#e8e8e8"/>
  <circle cx="938.5" cy="7" r="1.8" fill="#3b3a39"/>
  <path d="M935.2 11.6 q3.3 -3.6 6.6 0" fill="#3b3a39"/>
  <g stroke="#f0f0f0" stroke-width="1" fill="none">
    <path d="M960 9.5 h8"/>
    <rect x="985.5" y="6.5" width="6" height="6"/>
    <path d="M987.5 4.5 h6 v6"/>
    <path d="M1007.5 5 l7.5 7.5 M1015 5 l-7.5 7.5"/>
  </g>
</svg>
<div class="t" style="left:394px;top:82px;font-size:6.1px;color:#f3f3f3">arjago_sprzedaz_2005_2019 — Power BI Desktop</div>
<div class="t" style="left:877px;top:82px;font-size:6.3px;color:#f3f3f3">Arkadiusz Nowicki</div>

<!-- ribbon tabs -->
<div class="t rt" style="left:12px">Plik</div>
<div class="t rt" style="left:44px;color:#252423">Narzędzia główne</div>
<div class="a" style="left:44px;top:107.5px;width:60px;height:2px;background:#117865"></div>
<div class="t rt" style="left:121px">Wstaw</div>
<div class="t rt" style="left:160px">Modelowanie</div>
<div class="t rt" style="left:221px">Widok</div>
<div class="t rt" style="left:260px">Optymalizowanie</div>
<div class="t rt" style="left:334px">Pomoc</div>

<!-- ribbon separators -->
<div class="a sep" style="left:92px"></div>
<div class="a sep" style="left:349px"></div>
<div class="a sep" style="left:416px"></div>
<div class="a sep" style="left:535px"></div>
<div class="a sep" style="left:587px"></div>
<div class="a sep" style="left:624px"></div>
<div class="a sep" style="left:658px"></div>


<!-- ribbon icons -->
<svg class="a" style="left:0;top:0" width="700" height="161">
<g fill="none" stroke-width="1" stroke-linejoin="round">
<!-- Wklej disabled -->
<path d="M10.5 119.5 h4 l1 -2 h3 l1 2 h4 v14 h-13z" stroke="#e3d9c6" fill="#f6f0e2"/>
<rect x="17.5" y="123.5" width="7" height="10" stroke="#d4d2d0" fill="#f8f8f8"/>
<!-- scissors -->
<path d="M30 117 l4 6 M34 117 l-4 6" stroke="#c8c6c4"/><circle cx="30" cy="124.5" r="1.3" stroke="#c8c6c4"/><circle cx="34" cy="124.5" r="1.3" stroke="#c8c6c4"/>
<!-- copy -->
<path d="M28.5 128.5 h4 l2 2 v5 h-6z M31 130.5 h3 l2 2 v4 h-5z" stroke="#cfcdcb"/>
<!-- painter -->
<path d="M29 147 l3 -3 l3 1 l-3 3z" stroke="#ecc59c" fill="#f4dcc0"/><path d="M33 144 l3 -3" stroke="#cfcdcb"/>
<!-- Pobierz dane -->
<path d="M101.5 119 v10 q0 2 6 2" stroke="#616161"/><path d="M113.5 119 v4" stroke="#616161"/>
<ellipse cx="107.5" cy="119" rx="6" ry="2.2" stroke="#616161" fill="#fafafa"/>
<rect x="108.5" y="124.5" width="8" height="7.5" stroke="#616161" fill="#fafafa"/>
<path d="M108.5 127 h8 M108.5 129.5 h8 M111.2 124.5 v7.5 M113.8 124.5 v7.5" stroke="#8a8a8a" stroke-width="0.7"/>
<!-- Excel -->
<path d="M144.5 117.5 h6 l4 4 v9.5 h-10z" stroke="#616161" fill="#fafafa"/><path d="M150.5 117.5 v4 h4" stroke="#616161"/>
<rect x="149.5" y="125" width="8" height="7.5" fill="#1e7145" stroke="none"/>
<path d="M151.8 127 l3.4 3.6 M155.2 127 l-3.4 3.6" stroke="#fff" stroke-width="0.9"/>
<!-- OneLake -->
<rect x="195.5" y="117" width="15.5" height="13.5" stroke="#616161" fill="#fafafa"/><rect x="195.5" y="117" width="15.5" height="2.5" fill="#8a8a8a" stroke="none"/>
<path d="M204.5 124.5 v6.5 q0 1.5 3.5 1.5 q3.5 0 3.5 -1.5 v-6.5" stroke="#5aa0d0" fill="#d6ecf8"/><ellipse cx="208" cy="124.5" rx="3.5" ry="1.3" stroke="#5aa0d0" fill="#d6ecf8"/>
<!-- SQL Server -->
<path d="M232.5 117.5 h5.5 l4 4 v9.5 h-9.5z" stroke="#616161" fill="#fafafa"/><path d="M238 117.5 v4 h4" stroke="#616161"/>
<path d="M239.5 124.5 v6.5 q0 1.5 3.3 1.5 q3.3 0 3.3 -1.5 v-6.5" stroke="#d9a760" fill="#fbeed8"/><ellipse cx="242.8" cy="124.5" rx="3.3" ry="1.3" stroke="#d9a760" fill="#fbeed8"/>
<!-- Wprowadz dane -->
<rect x="257" y="117.5" width="15" height="13.5" stroke="#616161" fill="#fafafa"/><rect x="257" y="117.5" width="15" height="2.5" fill="#8a8a8a" stroke="none"/>
<path d="M257 122.5 h15 M257 126.5 h15 M262 117.5 v13.5 M267 117.5 v13.5" stroke="#8a8a8a" stroke-width="0.8"/>
<path d="M259.5 115.5 v7 M256 119 h7" stroke="#3aa05a" stroke-width="1"/>
<!-- Dataverse -->
<g transform="rotate(-25 295.5 123.5)">
<path d="M289.5 125.5 a6.5 4.8 0 1 1 8 3.2" stroke="#616161" stroke-width="1.2"/>
<path d="M301.5 121.5 a6.5 4.8 0 1 1 -8 -3.2" stroke="#616161" stroke-width="1.2"/>
<ellipse cx="295.5" cy="123.5" rx="2.8" ry="2" stroke="#616161" stroke-width="1.1"/>
</g>
<!-- Najnowsze -->
<path d="M321.5 117.5 h6 l4 4 v9.5 h-10z" stroke="#616161" fill="#fafafa"/><path d="M327.5 117.5 v4 h4" stroke="#616161"/>
<circle cx="332" cy="128.5" r="4" stroke="#4a9ad6" fill="#e4f1fb"/><path d="M332 126.3 v2.3 h2" stroke="#4a9ad6"/>
<!-- Przeksztalc -->
<rect x="361" y="117.5" width="15" height="13.5" stroke="#616161" fill="#fafafa"/><rect x="361" y="117.5" width="15" height="2.5" fill="#8a8a8a" stroke="none"/>
<path d="M361 122.5 h15 M361 126.5 h15 M366 117.5 v13.5 M371 117.5 v13.5" stroke="#8a8a8a" stroke-width="0.8"/>
<path d="M367 131.5 l1 -3.5 l8.5 -8.5 l2.5 2.5 l-8.5 8.5z" stroke="#4a9ad6" fill="#d6ecf8"/>
<!-- Odswiez -->
<path d="M392.5 117.5 h6 l4 4 v9.5 h-10z" stroke="#616161" fill="#fafafa"/><path d="M398.5 117.5 v4 h4" stroke="#616161"/>
<path d="M399.5 126.5 a4 4 0 0 1 7.3 -1 M406.5 130 a4 4 0 0 1 -7.3 1" stroke="#3aa05a" stroke-width="1.2"/>
<path d="M405.5 123 l1.6 2.7 l-2.9 0.4" stroke="#3aa05a"/>
<!-- Nowy element wizualny -->
<rect x="435" y="123" width="5.5" height="9" fill="#4a9ad6" stroke="#3a7ab6"/>
<rect x="440.5" y="116.5" width="5" height="15.5" stroke="#616161" fill="#fafafa"/>
<rect x="445.5" y="120.5" width="4.5" height="11.5" stroke="#8a8a8a" fill="#d0d0d0"/>
<path d="M447.5 125 v7.5 M444 128.7 h7.5" stroke="#3aa05a" stroke-width="1"/>
<!-- Pole tekstowe -->
<rect x="469.5" y="118" width="16.5" height="12.5" stroke="#616161" fill="#fafafa"/>
<text x="477.8" y="128" font-size="9" fill="#4a9ad6" text-anchor="middle" font-family="Liberation Sans" stroke="none">A</text>
<!-- Wiecej wizualizacji -->
<rect x="504.5" y="122.5" width="4.5" height="9" stroke="#616161" fill="#fafafa"/>
<rect x="509" y="116.5" width="4.5" height="15" stroke="#616161" fill="#fafafa"/>
<rect x="513.5" y="120.5" width="4" height="11" stroke="#8a8a8a" fill="#fafafa"/>
<path d="M508 132 l1 -3 l8 -8 l2.2 2.2 l-8 8z" stroke="#4a9ad6" fill="#d6ecf8"/>
<!-- Nowa miara -->
<rect x="545" y="117" width="10.5" height="14.5" stroke="#616161" fill="#fafafa"/><rect x="546" y="118" width="8.5" height="3" fill="#4a9ad6" stroke="none"/>
<g fill="#616161" stroke="none"><rect x="546.5" y="123" width="2" height="1.5"/><rect x="549.3" y="123" width="2" height="1.5"/><rect x="552" y="123" width="2" height="1.5"/><rect x="546.5" y="125.8" width="2" height="1.5"/><rect x="549.3" y="125.8" width="2" height="1.5"/><rect x="552" y="125.8" width="2" height="1.5"/><rect x="546.5" y="128.5" width="2" height="1.5"/><rect x="549.3" y="128.5" width="2" height="1.5"/><rect x="552" y="128.5" width="2" height="1.5"/></g>
<!-- Szybka miara -->
<rect x="566" y="117" width="10.5" height="14.5" stroke="#616161" fill="#fafafa"/><rect x="567" y="118" width="8.5" height="3" fill="#8a8a8a" stroke="none"/>
<g fill="#616161" stroke="none"><rect x="567.5" y="123" width="2" height="1.5"/><rect x="570.3" y="123" width="2" height="1.5"/><rect x="573" y="123" width="2" height="1.5"/><rect x="567.5" y="125.8" width="2" height="1.5"/><rect x="570.3" y="125.8" width="2" height="1.5"/><rect x="573" y="125.8" width="2" height="1.5"/><rect x="567.5" y="128.5" width="2" height="1.5"/><rect x="570.3" y="128.5" width="2" height="1.5"/><rect x="573" y="128.5" width="2" height="1.5"/></g>
<path d="M565 115.5 l-3.5 6 h3 l-2 5.5 l5 -7 h-3 l2 -4.5z" fill="#f2b01e" stroke="#e09000" stroke-width="0.5"/>
<!-- Poufnosc disabled -->
<rect x="600.5" y="117" width="11.5" height="14.5" stroke="#d8e2ea" fill="#eef4f9"/>
<path d="M603 123 l6 -6 M605 126 l7 -7 M604 129 l5 -5" stroke="#c9d6e2" stroke-width="1.2"/>
<!-- Publikuj -->
<rect x="635.5" y="124.5" width="4" height="7" stroke="#616161"/>
<rect x="639.5" y="120.5" width="3.5" height="11" stroke="#616161"/>
<path d="M643 131.5 v-14.5 h3.5 v14.5" stroke="#616161"/>
<path d="M644.5 127 q3 -4 6 0" stroke="#4ab0c0" stroke-width="1.1"/>
</g>
</svg>

<!-- ribbon labels -->
<div class="lb dis" style="left:15.5px">Wklej</div>
<div class="t dis sm" style="left:39px;top:117px">Wytnij</div>
<div class="t dis sm" style="left:39px;top:129.5px">Kopiuj</div>
<div class="t dis sm" style="left:39px;top:142px">Malarz formatów</div>
<div class="lb" style="left:107.5px">Pobierz<br>dane ▾</div>
<div class="lb" style="left:149px">Skoroszyt programu<br>Excel</div>
<div class="lb" style="left:202.5px">Centrum danych<br>OneLake ▾</div>
<div class="lb" style="left:236.5px">SQL<br>Server</div>
<div class="lb" style="left:264px">Wprowadź<br>dane</div>
<div class="lb" style="left:296px">Dataverse</div>
<div class="lb" style="left:327px">Najnowsze<br>źródła ▾</div>
<div class="lb" style="left:369px">Przekształć<br>dane ▾</div>
<div class="lb" style="left:398px">Odśwież</div>
<div class="lb" style="left:442px">Nowy element<br>wizualny</div>
<div class="lb" style="left:476px">Pole<br>tekstowe</div>
<div class="lb" style="left:510px">Więcej<br>wizualizacji ▾</div>
<div class="lb" style="left:550px">Nowa<br>miara</div>
<div class="lb" style="left:571.5px">Szybka<br>miara</div>
<div class="lb dis" style="left:605.5px">Poufność<br>▾</div>
<div class="lb" style="left:640px">Publikuj</div>
<div class="gl" style="left:47px">Schowek</div>
<div class="gl" style="left:220px">Dane</div>
<div class="gl" style="left:382px">Zapytania</div>
<div class="gl" style="left:476.5px">Wstaw</div>
<div class="gl" style="left:561.5px">Obliczenia</div>
<div class="gl" style="left:605.5px">Poufność</div>
<div class="gl" style="left:641px">Udostępnij</div>
<svg class="a" style="left:1013px;top:151px" width="10" height="8"><path d="M3 6 L5 4 L7 6" stroke="#323130" stroke-width="1" fill="none"/></svg>


<!-- page tabs -->
<div class="t" style="left:42px;top:673.8px;font-size:6.4px;color:#484644">va</div>
<div class="a" style="left:59px;top:667px;width:1px;height:18px;background:#dedcda"></div>
<div class="tb" style="left:59px;width:76px">obroty_kontrahenci</div>
<div class="a" style="left:135px;top:667px;width:1px;height:18px;background:#dedcda"></div>
<div class="tb" style="left:135px;width:65px">YoY% sprzedaz</div>
<div class="a" style="left:200px;top:667px;width:1px;height:18px;background:#dedcda"></div>
<div class="tb" style="left:200px;width:54px">Producenci</div>
<div class="a" style="left:254px;top:667px;width:1px;height:18px;background:#dedcda"></div>
<div class="tb" style="left:254px;width:54px">obroty_zysk</div>
<div class="a" style="left:308px;top:667px;width:1px;height:18px;background:#dedcda"></div>
<div class="tb" style="left:308px;width:40px">Marze</div>
<div class="a" style="left:348px;top:667px;width:1px;height:18px;background:#dedcda"></div>
<div class="tb" style="left:348px;width:65px">llosc odbiorców</div>
<div class="a" style="left:413px;top:667px;width:1px;height:18px;background:#dedcda"></div>
<div class="tb" style="left:413px;width:41px">pareto</div>
<div class="a" style="left:454px;top:667px;width:1px;height:18px;background:#dedcda"></div>
<div class="tb" style="left:454px;width:108px">Grupy kontrahentów sprzedaz</div>
<div class="a" style="left:562px;top:667px;width:1px;height:18px;background:#dedcda"></div>
<div class="tb" style="left:562px;width:95px">rodzaj podmiotu_sprzedaz</div>
<div class="a" style="left:657px;top:667px;width:1px;height:18px;background:#dedcda"></div>
<div class="tb" style="left:657px;width:80px">asortyment sprzedaz</div>
<div class="a" style="left:737px;top:667px;width:1px;height:18px;background:#dedcda"></div>
<div class="tb" style="left:737px;width:45px">Strona 1</div>
<div class="a" style="left:782px;top:667px;width:1px;height:18px;background:#dedcda"></div>
<div class="a" style="left:782px;top:666px;width:51px;height:20px;background:#fbfbfb"></div><div class="a" style="left:782px;top:683.5px;width:51px;height:2px;background:#117865"></div><div class="tb" style="left:782px;width:51px;font-weight:bold;color:#252423">SPIS stron</div>
<div class="a" style="left:833px;top:667px;width:1px;height:18px;background:#dedcda"></div>
<div class="tb" style="left:833px;width:86px">Sprzedaz po miejscach</div>
<div class="a" style="left:919px;top:667px;width:1px;height:18px;background:#dedcda"></div>
<div class="tb" style="left:919px;width:46px">Strona 2</div>
<div class="a" style="left:965px;top:667px;width:1px;height:18px;background:#dedcda"></div>
<div class="a" style="left:42px;top:667px;width:1px;height:18px;background:#b0aeac"></div>
<svg class="a" style="left:20px;top:672px" width="22" height="10"><path d="M7.5 2.5 L4.5 5 L7.5 7.5Z" fill="#323130"/><path d="M16 2.5 L19 5 L16 7.5Z" fill="#c8c6c4"/></svg>
<div class="a" style="left:965px;top:668px;width:21px;height:17px;background:#117865"></div>
<svg class="a" style="left:965px;top:668px" width="21" height="17"><path d="M10.5 4.5 V12.5 M6.5 8.5 H14.5" stroke="#fff" stroke-width="2"/></svg>
<div class="t" style="left:3px;top:689.3px;font-size:6.2px;color:#605e5c">Strona 16 z 17</div>
<svg class="a" style="left:900px;top:686px" width="124" height="13">
<path d="M6 6.5 h3" stroke="#605e5c" stroke-width="1"/>
<path d="M11 6.5 h52" stroke="#8a8886" stroke-width="1"/>
<rect x="39" y="3" width="2" height="7" fill="#323130"/>
<path d="M66 6.5 h5 M68.5 4 v5" stroke="#605e5c" stroke-width="1"/>
<rect x="102.5" y="2.5" width="12" height="8" fill="none" stroke="#8a8886" stroke-width="1"/>
<path d="M104.5 6.5 l4 -2.5 l4 2.5 l-4 2.5z" fill="#b5b3b1"/>
</svg>
<div class="t" style="left:978px;top:689.3px;font-size:6.2px;color:#605e5c">131%</div>
<!-- taskbar -->
<svg class="a" style="left:0;top:698px" width="1024" height="17">
<rect x="0" y="0" width="213" height="1" fill="#1c1c1c"/>
<g fill="#f5f5f5"><rect x="6" y="5" width="3.4" height="3.4"/><rect x="10" y="5" width="3.4" height="3.4"/><rect x="6" y="9" width="3.4" height="3.4"/><rect x="10" y="9" width="3.4" height="3.4"/></g>
<circle cx="30" cy="7.5" r="3" fill="none" stroke="#e8e8e8" stroke-width="1"/><path d="M28 9.5 l-3 3" stroke="#e8e8e8" stroke-width="1.2"/>
<rect x="44.5" y="4" width="10" height="10" fill="#6aa6e8"/><text x="49.5" y="12" font-size="8" font-weight="bold" fill="#fff" text-anchor="middle" font-family="Liberation Sans">W</text>
<rect x="63" y="5" width="12" height="9" fill="#e8c05a"/><rect x="63" y="8" width="12" height="6" fill="#f3d57a"/><rect x="66" y="10" width="6" height="3" fill="#6b9ad1"/>
<rect x="84" y="4" width="10" height="10" fill="#2aa5a0"/><rect x="86" y="5" width="8" height="8" fill="#7ad7cf"/><text x="89" y="12" font-size="7" fill="#0d5752" text-anchor="middle" font-family="Liberation Sans">P</text>
<rect x="103" y="4" width="11" height="10" fill="#c0368c"/><rect x="105" y="5" width="8" height="8" fill="#e9a3c9"/><text x="109" y="12" font-size="7" font-weight="bold" fill="#8c1d5e" text-anchor="middle" font-family="Liberation Sans">A</text>
<rect x="122" y="4" width="11" height="10" fill="#1e7145"/><rect x="124" y="5" width="8" height="8" fill="#b9e0b3"/><text x="128" y="12" font-size="7" fill="#1e7145" text-anchor="middle" font-family="Liberation Sans">X</text>
<circle cx="148" cy="9" r="3.8" fill="none" stroke="#4aa8e8" stroke-width="1.6"/><path d="M144.5 9 h7" stroke="#4aa8e8" stroke-width="1.2"/><path d="M143 6 q6 -5 10 -1" stroke="#f0c040" stroke-width="0.8" fill="none"/>
<circle cx="167.5" cy="9" r="5" fill="#e66000"/><circle cx="168.5" cy="8.5" r="3" fill="#ffbd4f"/><circle cx="169" cy="9" r="2" fill="#7542e5"/>
<circle cx="187.5" cy="9" r="5" fill="#1a8dd8"/><circle cx="189" cy="10" r="2.8" fill="#45c06a"/><circle cx="187" cy="8.5" r="2" fill="#1a8dd8"/>
<rect x="202" y="4" width="11" height="10" rx="1" fill="#e8a33a"/><rect x="204" y="6" width="7" height="6" fill="#f6e0b8"/><path d="M206 7 l3 2 l-3 2z" fill="#c6781a"/>
<rect x="223" y="3" width="8" height="12" fill="#7a8290"/><rect x="224" y="4" width="6" height="3" fill="#c8ced8"/><g fill="#e0e4ea"><rect x="224" y="8" width="2" height="1.5"/><rect x="227" y="8" width="2" height="1.5"/><rect x="224" y="10.5" width="2" height="1.5"/><rect x="227" y="10.5" width="2" height="1.5"/><rect x="224" y="13" width="2" height="1.2"/><rect x="227" y="13" width="2" height="1.2"/></g>
<ellipse cx="247" cy="10" rx="5" ry="3.5" fill="#9aa6ae"/><circle cx="251" cy="6" r="2" fill="#c8d0d6"/>
<rect x="261" y="4" width="11" height="10" rx="1" fill="#f0a820"/><rect x="263" y="6" width="7" height="6" fill="#fbe07a"/>
<rect x="277" y="0" width="18" height="17" fill="#5a5955"/>
<circle cx="286" cy="9" r="5" fill="#db4437"/><path d="M286 9 L281.7 11.5 A5 5 0 0 0 290.3 11.5Z" fill="#0f9d58"/><path d="M286 9 L290.3 11.5 A5 5 0 0 0 286 4Z" fill="#f4b400"/><circle cx="286" cy="9" r="2.2" fill="#fff"/><circle cx="286" cy="9" r="1.6" fill="#4285f4"/>
<rect x="297" y="0" width="18" height="17" fill="#4a4945"/>
<rect x="301" y="9" width="3" height="5" fill="#c9a000"/><rect x="304.5" y="6" width="3" height="8" fill="#e8b800"/><rect x="308" y="3" width="3" height="11" fill="#f2c811"/>
<rect x="299" y="15.5" width="14" height="1.5" fill="#9ec5ea"/>
<path d="M881.5 10 l2.5 -2.5 l2.5 2.5" stroke="#ddd" stroke-width="0.9" fill="none"/>
<rect x="895" y="5" width="4" height="6.5" fill="none" stroke="#ddd" stroke-width="0.9"/><rect x="894" y="6.5" width="6" height="2" fill="#ddd"/>
<path d="M906 12 a2 2 0 0 1 0.8 -4 a3 3 0 0 1 5.6 0.3 a1.9 1.9 0 0 1 0.4 3.7z" fill="#e8e8e8"/>
<rect x="918.5" y="7" width="8" height="5" fill="#e0e0e0"/><rect x="919" y="6" width="3" height="1.5" fill="#e0e0e0"/>
<rect x="931.5" y="5.5" width="7" height="5" fill="none" stroke="#ddd" stroke-width="0.9"/><path d="M933 12.5 h4 M935 10.5 v2" stroke="#ddd" stroke-width="0.9"/>
<path d="M943.5 7.5 h1.5 l2.5 -2 v7.5 l-2.5 -2 h-1.5z" fill="#ddd"/><path d="M949 7 q1 2 0 4 M950.5 6 q1.5 3 0 6" stroke="#ddd" stroke-width="0.7" fill="none"/>
<rect x="1001.5" y="4" width="9" height="8" fill="#f0f0f0"/><path d="M1003 6.5 h6 M1003 8.3 h6 M1003 10 h4" stroke="#363530" stroke-width="0.7"/><path d="M1003.5 12 l-0.5 2 l3 -2z" fill="#f0f0f0"/>
</svg>
<div class="t" style="left:958.5px;top:703px;font-size:6.3px;color:#e8e8e8">POL</div>
<div class="t" style="left:978px;top:703px;font-size:6.3px;color:#e8e8e8">14:38</div>
<div class="a" style="left:1022px;top:94px;width:2px;height:497px;background:#f3f2f1"></div>
<div class="a" style="left:1022px;top:591px;width:2px;height:107px;background:#1a1a1a"></div>


<!-- side panes -->
<div class="a" style="left:968px;top:161px;width:54px;height:1px;background:#e6e4e2"></div>
<svg class="a" style="left:968px;top:161px" width="56" height="80">
<g fill="none" stroke="#4a4846" stroke-width="1.1" transform="translate(-968,-161)">
<path d="M977.5 168.5 l-2.5 2.5 l2.5 2.5 M980 168.5 l-2.5 2.5 l2.5 2.5"/>
<path d="M996 168.5 l-2.5 2.5 l2.5 2.5 M998.5 168.5 l-2.5 2.5 l2.5 2.5"/>
<path d="M1015 168.5 l-2.5 2.5 l2.5 2.5 M1017.5 168.5 l-2.5 2.5 l2.5 2.5"/>
<path d="M980.5 183.5 v6.5 l-4.5 -3.2z M976 186.8 h-2" stroke-width="1"/>
</g>
</svg>
<div class="vt" style="left:971.5px;top:194px;font-size:8.2px">Filtry</div>
<div class="vt" style="left:989.8px;top:182px;font-size:8.2px">Wizualizacje</div>
<div class="vt" style="left:1008px;top:182px;font-size:8.2px">Dane</div>
<!-- left nav -->
<div class="a" style="left:0;top:161px;width:2.5px;height:21px;background:#117865"></div>
<svg class="a" style="left:0;top:161px" width="22" height="70">
<g fill="none" stroke="#605e5c" stroke-width="0.9">
<path d="M7.5 7 v8 h8 M9.5 14.5 v-4 M11.5 14.5 v-5 M13.5 14.5 v-6"/>
<rect x="7.5" y="27.5" width="8" height="7"/><path d="M7.5 30 h8 M7.5 32.5 h8 M10.2 27.5 v7 M12.8 27.5 v7"/>
<rect x="10.5" y="48.5" width="5" height="3"/><rect x="10.5" y="53.5" width="5" height="3"/><path d="M7.5 50 v5 h3 M7.5 52.5 h3"/>
</g>
</svg>

<!-- slide content (absolute page coords) -->
<div class="panel" style="left:240px;top:167px;width:537px;height:179px"></div>
<div class="panel" style="left:83px;top:346px;width:694px;height:73px"></div>
<div class="panel" style="left:240px;top:419px;width:537px;height:240px"></div>
<div class="a" style="left:240px;top:418.5px;width:537px;height:1px;background:#cfd2d8"></div>
<div class="a" style="left:240px;top:345px;width:537px;height:1px;background:#eaecef"></div>
<svg class="a" style="left:0;top:0" width="1024" height="715">
  <polygon points="84,382 120,346 120,364 777,364 777,400 120,400 120,418" fill="#0b4a88"/>
</svg>
<div class="t" style="left:387.5px;top:189px;font-size:25px;color:#333">Spis stron</div>

<!-- slide text -->
<div class="li" style="left:244.5px;top:244.4px">1.Wstęp</div>
<div class="li" style="left:244.5px;top:266.7px">2.Mapa obszarowa - teren działania</div>
<div class="li" style="left:244.5px;top:288.8px">3.Mapa punktowa - odbiorca, miejscowość,...</div>
<div class="li" style="left:244.5px;top:311.1px">4.Obroty kontrahenci 2005 do 2019</div>
<div class="li" style="left:244.5px;top:427.3px">5.Sprzedaż <span class="sp">YoY</span>% - rok do roku</div>
<div class="li" style="left:244.5px;top:449.3px">6.Sprzedaż po producentach</div>
<div class="li" style="left:244.5px;top:471.5px">7.Obroty -zysk</div>
<div class="li" style="left:244.5px;top:493.8px">8.Marże</div>
<div class="li" style="left:244.5px;top:516.1px">9.Ilość odbiorców</div>
<div class="li" style="left:244.5px;top:538.3px">10.<span class="sp">Pareto</span></div>
<div class="li" style="left:244.5px;top:560.6px">11.Grupy kontrahentów-sprzedaż</div>
<div class="li" style="left:244.5px;top:582.9px">12.Rodzaj podmiotu-sprzedaż</div>
<div class="li" style="left:244.5px;top:605.3px">13.cdn.</div>
<div class="li tm" style="left:631.5px;top:266.7px">1'13" do 2'20"</div>
<div class="li tm" style="left:631px;top:288.8px">2'21" do  4'06"</div>
<div class="li tm" style="left:631px;top:311.1px">4'07" do  8'31"</div>
<div class="li tm" style="left:631px;top:427.3px">8'32" do 13'39"</div>
<div class="li tm" style="left:629px;top:449.3px">13'40" do 17'12"</div>
<div class="li tm" style="left:631.5px;top:471.5px">17'13" do 18'42"</div>
<div class="li tm" style="left:633px;top:493.8px">18'43" do 19'56"</div>
<div class="li tm" style="left:630px;top:516.1px">19'57" do 22'03"</div>
<div class="li tm" style="left:633.5px;top:538.3px">22'04" do 23'41"</div>
<div class="li tm" style="left:631.5px;top:560.6px">23'42" do 24'33"</div>
<div class="li tm" style="left:629px;top:582.9px">24'34" do 25'08"</div>
<div class="li" style="left:630.8px;top:244.4px">0</div>
<div class="li" style="left:652px;top:244.4px">do</div>
<div class="li tm" style="left:689.6px;top:244.4px">1'12"</div>
<div class="t" style="left:661px;top:230.5px;font-size:8.3px;color:#5a5a5a">OŚ CZASU</div>

<!-- photo -->
<svg class="a" style="left:864px;top:558.5px" width="77" height="92">
<defs>
<radialGradient id="sk" cx="0.45" cy="0.4" r="0.65"><stop offset="0" stop-color="#e2cbc0"/><stop offset="0.7" stop-color="#cfb0a2"/><stop offset="1" stop-color="#a88678"/></radialGradient>
</defs>
<rect x="0" y="0" width="77" height="92" fill="#eeeef0"/>
<path d="M0 92 L0 58 Q10 54 22 52 L35 76 L52 53 Q66 56 77 60 L77 92Z" fill="#474b58"/>
<path d="M20 50 Q26 60 35.5 79 Q44 62 56 51 L52 44 L24 44Z" fill="#cfb0a0"/>
<ellipse cx="37" cy="31" rx="22.5" ry="26" fill="url(#sk)"/>
<ellipse cx="14.5" cy="35" rx="3" ry="6" fill="#c9a898"/>
<path d="M22 30 q5 -2 10 0 M42 30 q5 -2 10 0" stroke="#7a6058" stroke-width="1.3" fill="none"/>
<path d="M29 45 q7 2 14 0" stroke="#9a7468" stroke-width="1" fill="none"/>
<path d="M36 33 l-2 9 h4" stroke="#b8958a" stroke-width="0.8" fill="none"/>
<rect x="0.5" y="0.5" width="76" height="91" fill="none" stroke="#aeb8d0" stroke-width="1"/>
</svg>
</body></html>
